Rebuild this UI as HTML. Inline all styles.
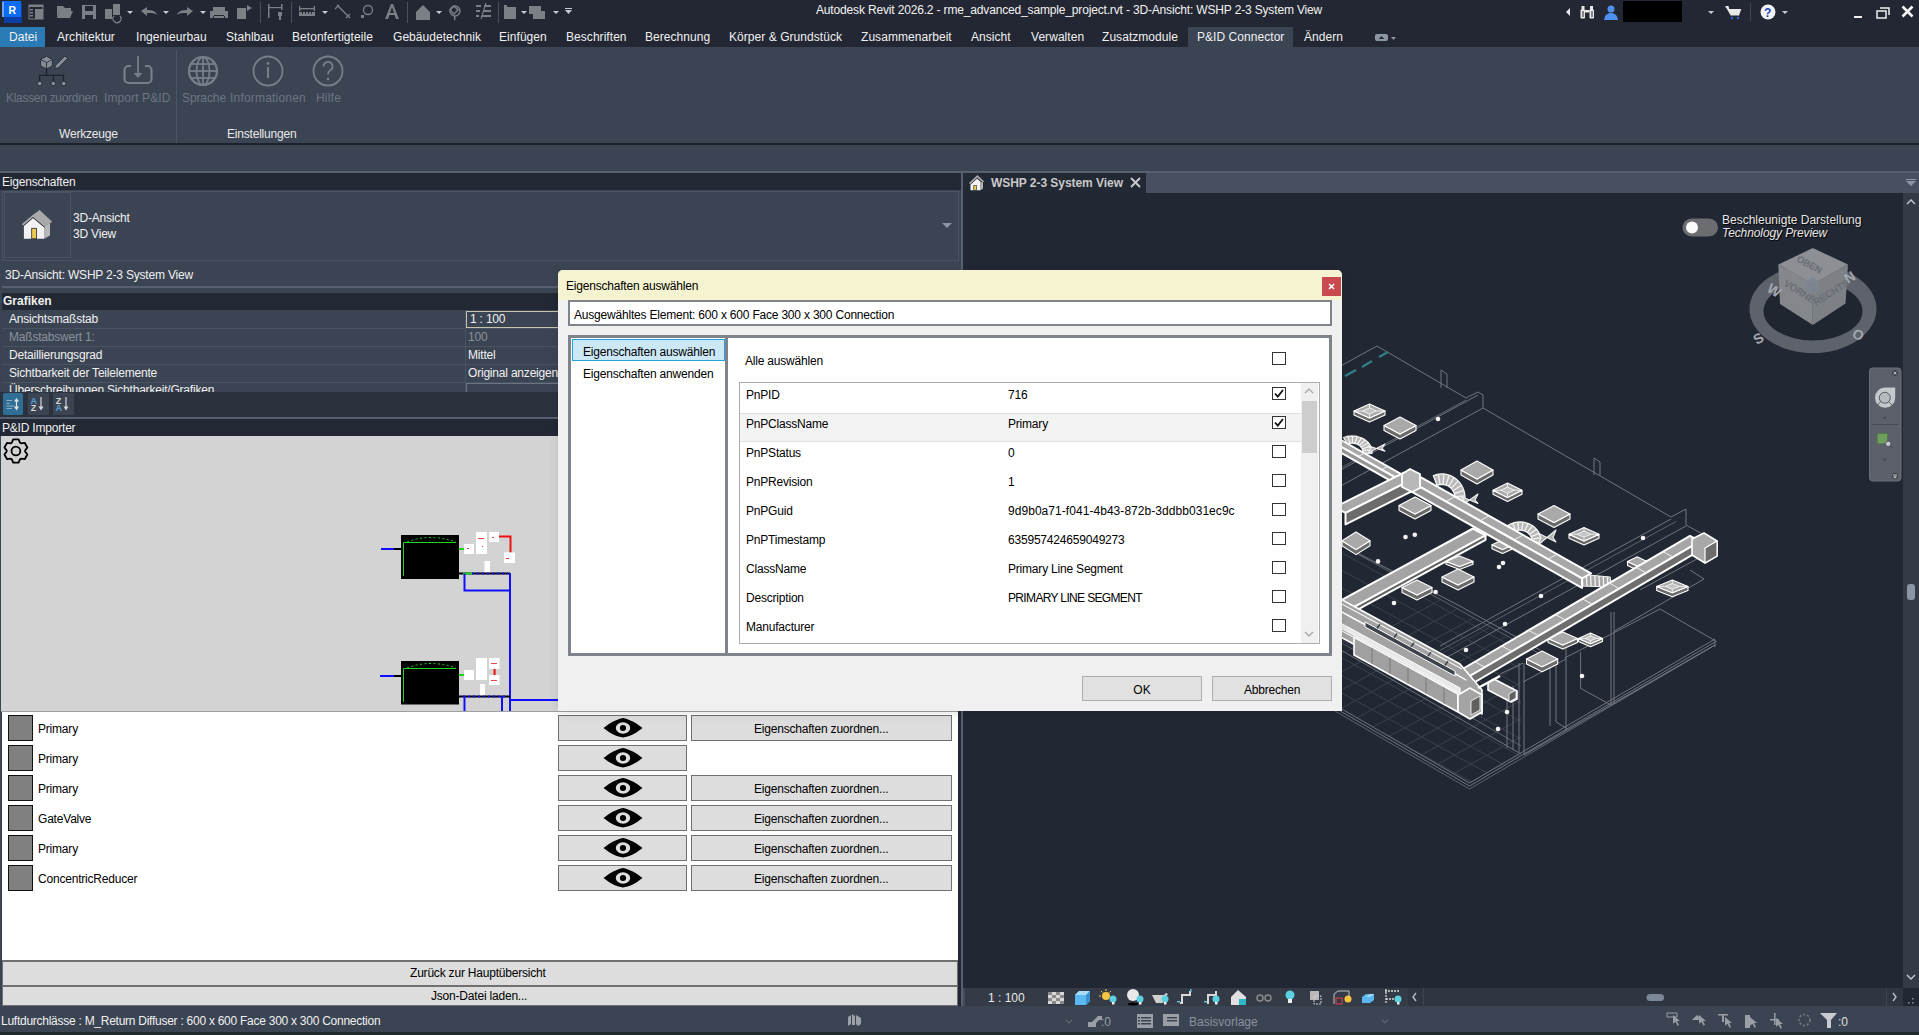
<!DOCTYPE html>
<html><head><meta charset="utf-8">
<style>
*{box-sizing:border-box;margin:0;padding:0}
html,body{width:1919px;height:1035px;overflow:hidden;background:#222733}
body{position:relative;font-family:"Liberation Sans",sans-serif;font-size:12px;letter-spacing:-0.2px;color:#f0f0f0}
.a{position:absolute}
.t{position:absolute;white-space:nowrap;line-height:14px}
</style></head><body>

<!-- TITLE BAR -->
<div class="a" style="left:0;top:0;width:1919px;height:27px;background:#222733"></div>
<div class="t" style="left:816px;top:3px;color:#f2f2f2;letter-spacing:-0.16px">Autodesk Revit 2026.2 - rme_advanced_sample_project.rvt - 3D-Ansicht: WSHP 2-3 System View</div>


<svg class="a" style="left:0;top:0" width="600" height="27" viewBox="0 0 600 27">
 <rect x="4" y="3" width="18" height="20" fill="#0b3fa6"/>
 <rect x="2" y="1" width="19" height="16" fill="#0d6cf2"/>
 <rect x="2" y="2" width="2" height="15" fill="#6aa6f2"/>
 <text x="8.5" y="13.5" font-family="Liberation Sans" font-weight="bold" font-size="10.5" fill="#fff">R</text>
 <g fill="#7b7f86">
  <rect x="29" y="5" width="14" height="14" fill="none" stroke="#7b7f86" stroke-width="1"/>
  <rect x="29" y="5" width="14" height="2"/><rect x="30" y="9" width="3" height="1.5"/><rect x="30" y="12" width="3" height="1.5"/><rect x="30" y="15" width="3" height="1.5"/>
  <rect x="35" y="9" width="8" height="10"/>
  <path d="M57,6 h6 l2,2 h6 v3 h-11 l-3,7 z"/><path d="M60,11 h13 l-3,7 h-13 z"/>
  <path d="M82,5 h14 v14 h-14 z M85,6 v5 h8 v-5 z M85,15 v4 h8 v-4 z" fill-rule="evenodd"/>
  <rect x="105" y="9" width="7" height="10"/><rect x="113" y="4" width="7" height="11"/>
  <path d="M114,16 a4,4 0 1,0 6,0" fill="none" stroke="#7b7f86" stroke-width="1.2"/>
  <path d="M141,11 l6,-4 v3 c5,0 9,1 10,5 c-2,-2 -5,-2 -10,-2 v3 z"/>
  <path d="M193,11 l-6,-4 v3 c-5,0 -9,1 -10,5 c2,-2 5,-2 10,-2 v3 z"/>
  <path d="M213,7 h12 v4 h3 v7 h-3 v-2 h-12 v2 h-3 v-7 h3 z M214,15 v3 h10 v-3 z" fill-rule="evenodd"/>
  <path d="M237,8 h9 v11 h-9 z"/><path d="M247,5 l5,3 -5,3 z"/>
  <rect x="268" y="4" width="1.5" height="14"/><rect x="268" y="7" width="14" height="1.2"/><rect x="281" y="4" width="1.5" height="6"/>
  <path d="M278,12 h4 v4 h-4 z M279,16 h2 v4 h-2 z"/>
  <rect x="299" y="12" width="16" height="4"/><rect x="299" y="8" width="16" height="1.3"/><rect x="299" y="6" width="1.3" height="5"/><rect x="313.7" y="6" width="1.3" height="5"/><g fill="#222733"><rect x="302" y="12" width="1" height="2"/><rect x="305" y="12" width="1" height="2"/><rect x="308" y="12" width="1" height="2"/><rect x="311" y="12" width="1" height="2"/></g>
  <path d="M337,5 l13,13 M335,9 l4,-4 M346,18 l4,-4" stroke="#7b7f86" stroke-width="1.4" fill="none"/>
  <circle cx="368" cy="10" r="4.5" fill="none" stroke="#7b7f86" stroke-width="1.3"/><rect x="361" y="15" width="3" height="3"/>
  <path d="M385,19 l6,-15 h2 l6,15 h-3 l-1.5,-4 h-5 l-1.5,4 z M390,13 h4 l-2,-6 z" fill-rule="evenodd"/>
  <path d="M416,12 l7,-7 7,7 v8 h-14 z"/>
  <path d="M454,6 l4,4 -4,4 -4,-4 z" fill="none" stroke="#7b7f86" stroke-width="1.5"/><circle cx="455" cy="11" r="5" fill="none" stroke="#7b7f86" stroke-width="1.4"/><rect x="454" y="16" width="1.5" height="4"/>
  <rect x="476" y="5" width="5" height="2"/><rect x="484" y="5" width="7" height="2"/><rect x="476" y="10" width="4" height="2"/><rect x="483" y="10" width="8" height="2"/><rect x="476" y="15" width="3" height="2"/><rect x="482" y="15" width="9" height="2"/><path d="M486,3 l-5,16" stroke="#7b7f86" stroke-width="1.2"/>
  <rect x="506" y="7" width="10" height="12"/><rect x="504" y="5" width="3" height="14"/>
  <rect x="529" y="6" width="12" height="8"/><rect x="533" y="11" width="12" height="8"/>
 </g>
 <g fill="#c8ccd2">
  <polygon points="127,11 133,11 130,14"/><polygon points="163,11 169,11 166,14"/><polygon points="200,11 206,11 203,14"/>
  <polygon points="322,11 328,11 325,14"/><polygon points="436,11 442,11 439,14"/><polygon points="521,11 527,11 524,14"/><polygon points="553,11 559,11 556,14"/>
  <polygon points="565,10 572,10 568.5,14"/><rect x="565" y="8" width="7" height="1"/>
 </g>
 <g fill="#4a505a"><rect x="260" y="2" width="1" height="21"/><rect x="291" y="2" width="1" height="21"/><rect x="407" y="2" width="1" height="21"/><rect x="498" y="2" width="1" height="21"/></g>
</svg>
<svg class="a" style="left:1550px;top:0" width="369" height="27" viewBox="1550 0 369 27">
 <polygon points="1570,8 1566,12 1570,16" fill="#e8e8e8"/>
 <g fill="#e8e8e8"><rect x="1580.5" y="9.5" width="4.5" height="9" rx="0.8"/><rect x="1589.5" y="9.5" width="4.5" height="9" rx="0.8"/><rect x="1581.5" y="6" width="3" height="4"/><rect x="1590" y="6" width="3" height="4"/><rect x="1585" y="10" width="4.5" height="2.5"/></g><g fill="#222733"><rect x="1582.5" y="11" width="1" height="6"/><rect x="1591.5" y="11" width="1" height="6"/></g>
 <circle cx="1611" cy="9" r="3.5" fill="#4f8ff0"/><path d="M1604,20 c1,-5 3,-7 7,-7 c4,0 6,2 7,7 z" fill="#4f8ff0"/>
 <rect x="1623" y="1" width="59" height="21" fill="#000"/>
 <polygon points="1708,11 1714,11 1711,14" fill="#c8ccd2"/>
 <path d="M1725.5,6.5 h3 l0.8,2.5 h12 l-2.3,6.5 h-8.3 z" fill="#e8e8e8"/><rect x="1725.5" y="6" width="3" height="1.5" fill="#e8e8e8"/>
 <circle cx="1732" cy="18" r="1.3" fill="#2a5fd0"/><circle cx="1738" cy="18" r="1.3" fill="#2a5fd0"/>
 <rect x="1750" y="3" width="1" height="18" fill="#3e4550"/>
 <circle cx="1768" cy="12" r="7.5" fill="#f2f2f2"/>
 <text x="1764" y="17" font-family="Liberation Sans" font-weight="bold" font-size="12" fill="#1a46c4">?</text>
 <polygon points="1782,11 1788,11 1785,14" fill="#c8ccd2"/>
 <rect x="1854" y="16" width="8" height="2" fill="#f0f0f0"/>
 <path d="M1877,11 h9 v7 h-9 z M1880,8 h9 v7" fill="none" stroke="#f0f0f0" stroke-width="1.5"/>
 <path d="M1902.5,6.5 l10,10 M1912.5,6.5 l-10,10" stroke="#f4f4f4" stroke-width="2.6"/>
</svg>
<!-- MENU BAR -->
<div class="a" style="left:0;top:27px;width:45px;height:20px;background:#2a7ab5"></div>
<div class="a" style="left:1188px;top:27px;width:105px;height:20px;background:#3b4453"></div>
<div id="menu" style="letter-spacing:0.05px">
<div class="t" style="left:9px;top:30px">Datei</div>
<div class="t" style="left:57px;top:30px">Architektur</div>
<div class="t" style="left:136px;top:30px">Ingenieurbau</div>
<div class="t" style="left:226px;top:30px">Stahlbau</div>
<div class="t" style="left:292px;top:30px">Betonfertigteile</div>
<div class="t" style="left:393px;top:30px">Gebäudetechnik</div>
<div class="t" style="left:499px;top:30px">Einfügen</div>
<div class="t" style="left:566px;top:30px">Beschriften</div>
<div class="t" style="left:645px;top:30px">Berechnung</div>
<div class="t" style="left:729px;top:30px">Körper &amp; Grundstück</div>
<div class="t" style="left:861px;top:30px">Zusammenarbeit</div>
<div class="t" style="left:971px;top:30px">Ansicht</div>
<div class="t" style="left:1031px;top:30px">Verwalten</div>
<div class="t" style="left:1102px;top:30px">Zusatzmodule</div>
<div class="t" style="left:1197px;top:30px">P&amp;ID Connector</div>
<div class="t" style="left:1304px;top:30px">Ändern</div>
<svg class="a" style="left:1370px;top:30px" width="30" height="14"><rect x="5" y="4" width="13" height="7" rx="2" fill="#8d96a5"/><polygon points="8.5,9 11.5,6 14.5,9" fill="#2b303a"/><polygon points="21,7 26,7 23.5,10" fill="#8d96a5"/></svg>
</div>

<!-- RIBBON -->
<div class="a" style="left:0;top:47px;width:1919px;height:97px;background:#3b4453"></div>
<div class="a" style="left:176px;top:50px;width:1px;height:93px;background:#4c5565"></div>
<div class="a" style="left:0;top:143px;width:1919px;height:2px;background:#1d222b"></div>
<div class="a" style="left:0;top:145px;width:1919px;height:26px;background:#3b4453"></div>
<div class="a" style="left:0;top:171px;width:1919px;height:2px;background:#566070"></div>


<svg class="a" style="left:0;top:47px" width="360" height="50" viewBox="0 47 360 50">
 <g>
  <g stroke="#1e232b" stroke-width="1.3" fill="none"><line x1="46.5" y1="68" x2="46.5" y2="75.4"/><polyline points="39.6,82 39.6,75.4 63.5,75.4 63.5,82"/><line x1="53.4" y1="75.4" x2="53.4" y2="82"/></g>
  <polygon points="46.5,56.2 52.4,59.5 52.4,65.8 46.5,69 40.6,65.8 40.6,59.5" fill="#868d98" stroke="#1e232b" stroke-width="0.8"/>
  <polyline points="40.6,59.5 46.5,62.6 52.4,59.5" fill="none" stroke="#1e232b" stroke-width="0.8"/><line x1="46.5" y1="62.6" x2="46.5" y2="69" stroke="#1e232b" stroke-width="0.8"/>
  <path d="M54.5,68.8 l1.2,-3.6 9.3,-9.3 2.6,2.6 -9.3,9.3 z" fill="#868d98" stroke="#1e232b" stroke-width="0.8"/>
  <g fill="#868d98" stroke="#1e232b" stroke-width="0.8"><circle cx="39.6" cy="83.5" r="2.3"/><circle cx="53.3" cy="83.5" r="2.3"/><circle cx="63.7" cy="83.5" r="2.3"/></g>
 </g>
 <g fill="none" stroke="#767e8a" stroke-width="1.8">
  <path d="M131,66 h-2.5 a4,4 0 0,0 -4,4 v9 a4,4 0 0,0 4,4 h19 a4,4 0 0,0 4,-4 v-9 a4,4 0 0,0 -4,-4 h-2.5" stroke-width="2.2"/>
  <line x1="138" y1="56" x2="138" y2="74"/>
  <circle cx="203" cy="71" r="14" stroke-width="2.2"/>
  <ellipse cx="203" cy="71" rx="6.5" ry="14"/>
  <line x1="203" y1="57" x2="203" y2="85"/>
  <line x1="189" y1="71" x2="217" y2="71"/>
  <line x1="191" y1="64" x2="215" y2="64"/><line x1="191" y1="78" x2="215" y2="78"/>
  <circle cx="268" cy="71" r="14.5"/>
  <circle cx="328" cy="71" r="14.5"/>
  <path d="M323.5,66.5 a4.5,4.5 0 1,1 6.5,4 c-1.5,1 -2,2 -2,4" />
 </g>
 <g fill="#767e8a">
  <polygon points="133.5,73 142.5,73 138,78"/>
  <circle cx="268" cy="63.5" r="1.4"/><rect x="267" y="67" width="2" height="11"/>
  <circle cx="328" cy="79" r="1.3"/>
 </g>
</svg>
<div class="t" style="left:6px;top:91px;color:#6c7583;letter-spacing:-0.3px">Klassen zuordnen</div>
<div class="t" style="left:104px;top:91px;color:#6c7583;letter-spacing:0.1px">Import P&amp;ID</div>
<div class="t" style="left:182px;top:91px;color:#6c7583;letter-spacing:-0.1px">Sprache</div>
<div class="t" style="left:230px;top:91px;color:#6c7583;letter-spacing:0.2px">Informationen</div>
<div class="t" style="left:316px;top:91px;color:#6c7583;letter-spacing:0.2px">Hilfe</div>
<div class="t" style="left:59px;top:127px;color:#e8e8e8">Werkzeuge</div>
<div class="t" style="left:227px;top:127px;color:#e8e8e8">Einstellungen</div>

<!-- PROPERTIES PANEL -->
<div class="a" style="left:0;top:173px;width:961px;height:17px;background:#222834"></div>
<div class="t" style="left:2px;top:175px">Eigenschaften</div>
<div class="a" style="left:0;top:190px;width:961px;height:228px;background:#3b4453"></div>
<div class="a" style="left:2px;top:191px;width:957px;height:70px;border:1px solid #4b5464"></div>
<div class="a" style="left:4px;top:192px;width:67px;height:66px;border:1px solid #4b5464"></div>
<svg class="a" style="left:0;top:200px" width="70" height="50" viewBox="0 200 70 50">
 <polygon points="44.3,226.5 50,223 50,235.5 44.3,238.7" fill="#b8b8b8"/>
 <polygon points="23.9,225.5 33,217.5 44.3,227 44.3,238.7 23.9,238.7" fill="#f2f2f2"/>
 <polygon points="21.7,224.3 33,214.8 39.6,210 52.2,221.7 44.3,227 33,217.5 23.9,225.5" fill="#a9a9a9"/>
 <polyline points="23.5,225.8 33,217.6 44.6,227.3" fill="none" stroke="#262b33" stroke-width="1"/>
 <rect x="31.7" y="228.3" width="4.8" height="10.4" fill="#f0c850" stroke="#262b33" stroke-width="0.8"/>
</svg>
<div class="t" style="left:73px;top:211px">3D-Ansicht</div>
<div class="t" style="left:73px;top:227px">3D View</div>
<svg class="a" style="left:942px;top:223px" width="10" height="6"><polygon points="0,0 10,0 5,5" fill="#8d96a5"/></svg>
<div class="t" style="left:5px;top:268px;letter-spacing:-0.2px">3D-Ansicht: WSHP 2-3 System View</div>
<div class="a" style="left:853px;top:267px;width:16px;height:3px;overflow:hidden"><div class="t" style="left:0;top:0;font-size:9px;letter-spacing:0;color:#fff">Typ be</div></div>
<div class="a" style="left:2px;top:286px;width:957px;height:2px;background:#566070"></div>
<div class="a" style="left:2px;top:293px;width:957px;height:17px;background:#222834"></div>
<div class="t" style="left:3px;top:294px;font-weight:bold;letter-spacing:0">Grafiken</div>
<div class="a" style="left:2px;top:328px;width:957px;height:1px;background:#4a5363"></div>
<div class="a" style="left:2px;top:346px;width:957px;height:1px;background:#4a5363"></div>
<div class="a" style="left:2px;top:364px;width:957px;height:1px;background:#4a5363"></div>
<div class="a" style="left:2px;top:382px;width:957px;height:1px;background:#4a5363"></div>
<div class="a" style="left:465px;top:310px;width:1px;height:82px;background:#4a5363"></div>
<div class="a" style="left:466px;top:311px;width:493px;height:17px;border:1px solid #c9c2ad"></div>
<div class="a" style="left:466px;top:383px;width:493px;height:9px;border:1px solid #6a7383;border-bottom:0"></div>
<div class="a" style="left:0;top:383px;width:961px;height:9px;overflow:hidden">
 <div class="t" style="left:9px;top:0px">Überschreibungen Sichtbarkeit/Grafiken</div>
</div>
<div class="t" style="left:9px;top:312px">Ansichtsmaßstab</div>
<div class="t" style="left:9px;top:330px;color:#8a929e">Maßstabswert 1:</div>
<div class="t" style="left:9px;top:348px">Detaillierungsgrad</div>
<div class="t" style="left:9px;top:366px">Sichtbarkeit der Teilelemente</div>
<div class="t" style="left:470px;top:312px">1 : 100</div>
<div class="t" style="left:468px;top:330px;color:#8a929e">100</div>
<div class="t" style="left:468px;top:348px">Mittel</div>
<div class="t" style="left:468px;top:366px">Original anzeigen</div>
<div class="a" style="left:0;top:392px;width:961px;height:25px;background:#2b313d"></div>
<div class="a" style="left:3px;top:393px;width:20px;height:22px;background:#2f6f96;border-radius:2px"></div>
<div class="a" style="left:28px;top:393px;width:21px;height:22px;background:#3b4453"></div>
<div class="a" style="left:53px;top:393px;width:21px;height:22px;background:#3b4453"></div>
<svg class="a" style="left:0;top:393px" width="76" height="22" viewBox="0 393 76 22">
 <g stroke="#8fb0c4" stroke-width="1"><line x1="6.5" y1="421.5" x2="12" y2="421.5" transform="translate(0,-21)"/><line x1="6.5" y1="403.5" x2="9.5" y2="403.5"/><line x1="6.5" y1="406" x2="14" y2="406"/><line x1="6.5" y1="408.5" x2="12" y2="408.5"/></g>
 <line x1="16.5" y1="400" x2="16.5" y2="408" stroke="#e6e6e6" stroke-width="1.2"/>
 <polygon points="14,401.5 16.5,398 19,401.5" fill="#e6e6e6"/><polygon points="14,406.5 16.5,410.5 19,406.5" fill="#e6e6e6"/>
 <text x="30.5" y="403.5" font-size="9" fill="#5aa0d8" font-family="Liberation Sans" font-weight="bold">A</text>
 <text x="30.8" y="411" font-size="9" fill="#d8d8d8" font-family="Liberation Sans" font-weight="bold">Z</text>
 <line x1="41" y1="397" x2="41" y2="409" stroke="#d8d8d8" stroke-width="1.2"/><polygon points="38.5,406.5 41,410.5 43.5,406.5" fill="#d8d8d8"/>
 <text x="55.8" y="403.5" font-size="9" fill="#d8d8d8" font-family="Liberation Sans" font-weight="bold">Z</text>
 <text x="55.5" y="411" font-size="9" fill="#5aa0d8" font-family="Liberation Sans" font-weight="bold">A</text>
 <line x1="66" y1="397" x2="66" y2="409" stroke="#d8d8d8" stroke-width="1.2"/><polygon points="63.5,406.5 66,410.5 68.5,406.5" fill="#d8d8d8"/>
</svg>
<div class="a" style="left:0;top:417px;width:961px;height:2px;background:#566070"></div>
<div class="a" style="left:961px;top:173px;width:2px;height:833px;background:#566070"></div>

<!-- VIEW -->
<div class="a" style="left:963px;top:173px;width:956px;height:20px;background:#465060"></div>
<div class="a" style="left:963px;top:173px;width:183px;height:20px;background:#222834"></div>
<div class="t" style="left:991px;top:176px;font-weight:bold;color:#c8c8c8;letter-spacing:-0.05px">WSHP 2-3 System View</div>
<div class="a" style="left:963px;top:193px;width:956px;height:813px;background:#222833"></div>
<!--3D--><svg class="a" style="left:963px;top:193px" width="956" height="813" viewBox="963 193 956 813"><defs><clipPath id="fg"><polygon points="1290,516 1521,645 1521,755 1469.5,783 1290,679"/></clipPath></defs><g clip-path="url(#fg)"><line x1="994.0" y1="624.3" x2="1494.0" y2="899.3" stroke="#3b424d" stroke-width="1" opacity="1"/><line x1="1010.0" y1="615.6" x2="1510.0" y2="890.6" stroke="#3b424d" stroke-width="1" opacity="1"/><line x1="1026.0" y1="606.9" x2="1526.0" y2="881.9" stroke="#3b424d" stroke-width="1" opacity="1"/><line x1="1042.0" y1="598.2" x2="1542.0" y2="873.2" stroke="#3b424d" stroke-width="1" opacity="1"/><line x1="1058.0" y1="589.4" x2="1558.0" y2="864.4" stroke="#3b424d" stroke-width="1" opacity="1"/><line x1="1074.0" y1="580.7" x2="1574.0" y2="855.7" stroke="#3b424d" stroke-width="1" opacity="1"/><line x1="1090.0" y1="572.0" x2="1590.0" y2="847.0" stroke="#3b424d" stroke-width="1" opacity="1"/><line x1="1106.0" y1="563.3" x2="1606.0" y2="838.3" stroke="#3b424d" stroke-width="1" opacity="1"/><line x1="1122.0" y1="554.6" x2="1622.0" y2="829.6" stroke="#3b424d" stroke-width="1" opacity="1"/><line x1="1138.0" y1="545.8" x2="1638.0" y2="820.8" stroke="#3b424d" stroke-width="1" opacity="1"/><line x1="1154.0" y1="537.1" x2="1654.0" y2="812.1" stroke="#3b424d" stroke-width="1" opacity="1"/><line x1="1170.0" y1="528.4" x2="1670.0" y2="803.4" stroke="#3b424d" stroke-width="1" opacity="1"/><line x1="1186.0" y1="519.7" x2="1686.0" y2="794.7" stroke="#3b424d" stroke-width="1" opacity="1"/><line x1="1202.0" y1="511.0" x2="1702.0" y2="786.0" stroke="#3b424d" stroke-width="1" opacity="1"/><line x1="1218.0" y1="502.2" x2="1718.0" y2="777.2" stroke="#3b424d" stroke-width="1" opacity="1"/><line x1="1234.0" y1="493.5" x2="1734.0" y2="768.5" stroke="#3b424d" stroke-width="1" opacity="1"/><line x1="1250.0" y1="484.8" x2="1750.0" y2="759.8" stroke="#3b424d" stroke-width="1" opacity="1"/><line x1="1266.0" y1="476.1" x2="1766.0" y2="751.1" stroke="#3b424d" stroke-width="1" opacity="1"/><line x1="1282.0" y1="467.4" x2="1782.0" y2="742.4" stroke="#3b424d" stroke-width="1" opacity="1"/><line x1="1298.0" y1="458.6" x2="1798.0" y2="733.6" stroke="#3b424d" stroke-width="1" opacity="1"/><line x1="1280.0" y1="687.5" x2="1440.0" y2="600.2" stroke="#3b424d" stroke-width="1" opacity="1"/><line x1="1296.5" y1="696.5" x2="1456.5" y2="609.3" stroke="#3b424d" stroke-width="1" opacity="1"/><line x1="1313.0" y1="705.6" x2="1473.0" y2="618.4" stroke="#3b424d" stroke-width="1" opacity="1"/><line x1="1329.5" y1="714.7" x2="1489.5" y2="627.5" stroke="#3b424d" stroke-width="1" opacity="1"/><line x1="1346.0" y1="723.8" x2="1506.0" y2="636.5" stroke="#3b424d" stroke-width="1" opacity="1"/><line x1="1362.5" y1="732.8" x2="1522.5" y2="645.6" stroke="#3b424d" stroke-width="1" opacity="1"/><line x1="1379.0" y1="741.9" x2="1539.0" y2="654.7" stroke="#3b424d" stroke-width="1" opacity="1"/><line x1="1395.5" y1="751.0" x2="1555.5" y2="663.8" stroke="#3b424d" stroke-width="1" opacity="1"/><line x1="1412.0" y1="760.1" x2="1572.0" y2="672.9" stroke="#3b424d" stroke-width="1" opacity="1"/><line x1="1428.5" y1="769.1" x2="1588.5" y2="681.9" stroke="#3b424d" stroke-width="1" opacity="1"/><line x1="1445.0" y1="778.2" x2="1605.0" y2="691.0" stroke="#3b424d" stroke-width="1" opacity="1"/><line x1="1461.5" y1="787.3" x2="1621.5" y2="700.1" stroke="#3b424d" stroke-width="1" opacity="1"/><line x1="1478.0" y1="796.4" x2="1638.0" y2="709.1" stroke="#3b424d" stroke-width="1" opacity="1"/><line x1="1494.5" y1="805.4" x2="1654.5" y2="718.2" stroke="#3b424d" stroke-width="1" opacity="1"/><line x1="1511.0" y1="814.5" x2="1671.0" y2="727.3" stroke="#3b424d" stroke-width="1" opacity="1"/><line x1="1527.5" y1="823.6" x2="1687.5" y2="736.4" stroke="#3b424d" stroke-width="1" opacity="1"/></g><polyline points="1335.0,705.0 1469.5,783.0 1715.0,639.0" fill="none" stroke="#70757e" stroke-width="1" stroke-linejoin="round"/><polyline points="1335.0,708.0 1469.5,786.0 1715.0,642.0" fill="none" stroke="#70757e" stroke-width="1" stroke-linejoin="round"/><polyline points="1335.0,711.0 1469.5,789.0 1715.0,645.0" fill="none" stroke="#5d636c" stroke-width="1" stroke-linejoin="round"/><line x1="1715.0" y1="640.0" x2="1715.0" y2="647.0" stroke="#70757e" stroke-width="1" opacity="1"/><line x1="1340.0" y1="649.6" x2="1521.0" y2="754.0" stroke="#70757e" stroke-width="1" opacity="1"/><line x1="1340.0" y1="642.0" x2="1521.0" y2="746.0" stroke="#5d636c" stroke-width="1" opacity="1"/><line x1="1524.0" y1="755.0" x2="1715.0" y2="645.0" stroke="#70757e" stroke-width="1" opacity="1"/><line x1="1507.0" y1="686.0" x2="1507.0" y2="748.0" stroke="#70757e" stroke-width="1" opacity="1"/><line x1="1513.0" y1="686.0" x2="1513.0" y2="750.0" stroke="#70757e" stroke-width="1" opacity="1"/><line x1="1519.0" y1="663.0" x2="1519.0" y2="752.0" stroke="#70757e" stroke-width="1" opacity="1"/><line x1="1524.0" y1="663.0" x2="1524.0" y2="755.0" stroke="#70757e" stroke-width="1" opacity="1"/><line x1="1550.0" y1="662.0" x2="1550.0" y2="726.0" stroke="#70757e" stroke-width="1" opacity="1"/><line x1="1556.0" y1="660.0" x2="1556.0" y2="722.0" stroke="#70757e" stroke-width="1" opacity="1"/><line x1="1566.0" y1="648.0" x2="1566.0" y2="731.0" stroke="#70757e" stroke-width="1" opacity="1"/><line x1="1580.6" y1="652.0" x2="1580.6" y2="688.0" stroke="#70757e" stroke-width="1" opacity="1"/><line x1="1611.0" y1="612.0" x2="1611.0" y2="705.0" stroke="#70757e" stroke-width="1" opacity="1"/><line x1="1614.0" y1="612.0" x2="1614.0" y2="704.0" stroke="#70757e" stroke-width="1" opacity="1"/><line x1="1564.6" y1="658.0" x2="1660.0" y2="609.0" stroke="#70757e" stroke-width="1" opacity="1"/><line x1="1660.0" y1="609.0" x2="1716.6" y2="641.5" stroke="#70757e" stroke-width="1" opacity="1"/><line x1="1523.0" y1="682.0" x2="1566.0" y2="659.0" stroke="#70757e" stroke-width="1" opacity="1"/><line x1="1500.0" y1="674.0" x2="1523.0" y2="663.0" stroke="#70757e" stroke-width="1" opacity="1"/><line x1="1580.0" y1="688.0" x2="1611.0" y2="705.0" stroke="#70757e" stroke-width="1" opacity="1"/><line x1="1556.0" y1="722.0" x2="1566.0" y2="728.0" stroke="#70757e" stroke-width="1" opacity="1"/><line x1="1611.0" y1="705.0" x2="1715.0" y2="645.0" stroke="#70757e" stroke-width="1" opacity="1"/><line x1="1614.5" y1="631.0" x2="1704.0" y2="579.0" stroke="#70757e" stroke-width="1" opacity="1"/><line x1="1704.0" y1="579.0" x2="1690.0" y2="570.0" stroke="#70757e" stroke-width="1" opacity="1"/><polyline points="1335.0,369.0 1377.0,346.0 1466.0,398.0" fill="none" stroke="#70757e" stroke-width="1" stroke-linejoin="round"/><polyline points="1466.0,398.0 1478.0,392.0 1483.0,395.0 1483.0,408.0" fill="none" stroke="#70757e" stroke-width="1" stroke-linejoin="round"/><line x1="1483.0" y1="408.0" x2="1671.0" y2="517.0" stroke="#70757e" stroke-width="1" opacity="1"/><line x1="1478.0" y1="395.0" x2="1335.0" y2="473.0" stroke="#70757e" stroke-width="1" opacity="1"/><line x1="1466.0" y1="400.0" x2="1335.0" y2="471.0" stroke="#5d636c" stroke-width="1" opacity="1"/><line x1="1483.0" y1="408.0" x2="1335.0" y2="489.0" stroke="#70757e" stroke-width="1" opacity="1"/><polyline points="1441.0,388.0 1441.0,370.0 1447.0,374.0 1447.0,388.0" fill="none" stroke="#70757e" stroke-width="1" stroke-linejoin="round"/><polyline points="1594.0,475.0 1594.0,458.0 1600.0,462.0 1600.0,475.0" fill="none" stroke="#70757e" stroke-width="1" stroke-linejoin="round"/><polyline points="1671.0,517.0 1686.0,509.0 1686.0,525.0 1717.0,542.0 1717.0,550.0" fill="none" stroke="#70757e" stroke-width="1" stroke-linejoin="round"/><line x1="1686.0" y1="526.0" x2="1440.0" y2="661.0" stroke="#70757e" stroke-width="1" opacity="1"/><line x1="1671.0" y1="519.0" x2="1440.0" y2="646.0" stroke="#70757e" stroke-width="1" opacity="1"/><line x1="1676.0" y1="521.5" x2="1440.0" y2="650.5" stroke="#5d636c" stroke-width="1" opacity="1"/><line x1="1717.0" y1="548.0" x2="1640.0" y2="590.0" stroke="#70757e" stroke-width="1" opacity="1"/><line x1="1345.0" y1="376.0" x2="1356.0" y2="370.0" stroke="#2f8088" stroke-width="2.2" opacity="1"/><line x1="1362.0" y1="367.0" x2="1372.0" y2="361.0" stroke="#2f8088" stroke-width="2.2" opacity="1"/><line x1="1379.0" y1="357.0" x2="1388.0" y2="352.0" stroke="#2f8088" stroke-width="2.2" opacity="1"/><line x1="1342.0" y1="545.0" x2="1456.0" y2="604.0" stroke="#70757e" stroke-width="1" opacity="1"/><line x1="1352.0" y1="551.0" x2="1456.0" y2="608.0" stroke="#5d636c" stroke-width="1" opacity="1"/><line x1="1456.0" y1="604.0" x2="1540.0" y2="650.0" stroke="#70757e" stroke-width="1" opacity="1"/><line x1="1456.0" y1="608.0" x2="1540.0" y2="654.0" stroke="#5d636c" stroke-width="1" opacity="1"/><polygon points="1433.4,475.7 1435.3,475.0 1437.2,474.5 1439.2,474.2 1441.2,474.0 1443.2,474.0 1445.2,474.2 1447.2,474.6 1449.1,475.2 1451.0,475.9 1452.8,476.8 1454.5,477.9 1456.2,479.1 1457.7,480.4 1459.1,481.9 1460.4,483.6 1461.5,485.3 1462.5,487.1 1463.3,489.0 1464.0,491.0 1464.5,493.0 1464.8,495.1 1465.0,497.2 1465.0,499.3 1464.8,501.3 1454.9,499.9 1455.0,498.7 1455.0,497.5 1454.9,496.3 1454.7,495.2 1454.4,494.0 1454.1,492.9 1453.6,491.8 1453.0,490.8 1452.4,489.8 1451.7,488.9 1450.9,488.1 1450.0,487.3 1449.1,486.6 1448.1,486.0 1447.1,485.5 1446.0,485.1 1444.9,484.8 1443.8,484.6 1442.7,484.5 1441.5,484.4 1440.4,484.5 1439.3,484.7 1438.2,485.0 1437.1,485.4" fill="#b8b8b8" stroke="#f4f4f4" stroke-width="1.3" stroke-linejoin="round"/><line x1="1438.5" y1="474.3" x2="1440.0" y2="484.6" stroke="#f4f4f4" stroke-width="1.3" opacity="1"/><line x1="1443.9" y1="474.1" x2="1443.1" y2="484.5" stroke="#f4f4f4" stroke-width="1.3" opacity="1"/><line x1="1449.1" y1="475.2" x2="1446.0" y2="485.1" stroke="#f4f4f4" stroke-width="1.3" opacity="1"/><line x1="1454.0" y1="477.5" x2="1448.8" y2="486.4" stroke="#f4f4f4" stroke-width="1.3" opacity="1"/><line x1="1458.2" y1="480.9" x2="1451.1" y2="488.4" stroke="#f4f4f4" stroke-width="1.3" opacity="1"/><line x1="1461.5" y1="485.3" x2="1453.0" y2="490.8" stroke="#f4f4f4" stroke-width="1.3" opacity="1"/><line x1="1463.8" y1="490.3" x2="1454.3" y2="493.7" stroke="#f4f4f4" stroke-width="1.3" opacity="1"/><line x1="1464.9" y1="495.8" x2="1454.9" y2="496.7" stroke="#f4f4f4" stroke-width="1.3" opacity="1"/><polygon points="1461.0,496.4 1469.5,500.0 1461.0,506.0 1464.0,500.0" fill="#b0b0b0" stroke="#f0f0f0" stroke-width="1.1" stroke-linejoin="round"/><polygon points="1478.0,494.0 1469.5,500.0 1478.0,503.6 1475.0,500.0" fill="#b0b0b0" stroke="#f0f0f0" stroke-width="1.1" stroke-linejoin="round"/><polygon points="1508.0,525.4 1509.6,524.5 1511.4,523.7 1513.2,523.0 1515.2,522.5 1517.1,522.2 1519.1,522.0 1521.1,522.0 1523.0,522.2 1525.0,522.5 1526.9,523.1 1528.7,523.7 1530.5,524.5 1532.2,525.5 1533.7,526.6 1535.2,527.9 1536.5,529.2 1537.6,530.7 1538.6,532.2 1539.5,533.9 1540.1,535.6 1540.6,537.3 1540.9,539.1 1541.0,540.9 1540.9,542.7 1532.0,541.9 1532.0,540.9 1531.9,539.9 1531.8,538.9 1531.5,537.9 1531.1,536.9 1530.6,536.0 1530.1,535.1 1529.4,534.3 1528.7,533.5 1527.8,532.8 1527.0,532.2 1526.0,531.6 1525.0,531.1 1523.9,530.7 1522.9,530.5 1521.7,530.3 1520.6,530.2 1519.5,530.2 1518.3,530.2 1517.2,530.4 1516.1,530.7 1515.1,531.1 1514.1,531.6 1513.1,532.1" fill="#b8b8b8" stroke="#f4f4f4" stroke-width="1.3" stroke-linejoin="round"/><line x1="1512.6" y1="523.2" x2="1515.8" y2="530.8" stroke="#f4f4f4" stroke-width="1.3" opacity="1"/><line x1="1517.8" y1="522.1" x2="1518.7" y2="530.2" stroke="#f4f4f4" stroke-width="1.3" opacity="1"/><line x1="1523.0" y1="522.2" x2="1521.7" y2="530.3" stroke="#f4f4f4" stroke-width="1.3" opacity="1"/><line x1="1528.1" y1="523.5" x2="1524.6" y2="531.0" stroke="#f4f4f4" stroke-width="1.3" opacity="1"/><line x1="1532.7" y1="525.9" x2="1527.3" y2="532.4" stroke="#f4f4f4" stroke-width="1.3" opacity="1"/><line x1="1536.5" y1="529.2" x2="1529.4" y2="534.3" stroke="#f4f4f4" stroke-width="1.3" opacity="1"/><line x1="1539.2" y1="533.3" x2="1531.0" y2="536.6" stroke="#f4f4f4" stroke-width="1.3" opacity="1"/><line x1="1540.7" y1="537.9" x2="1531.8" y2="539.2" stroke="#f4f4f4" stroke-width="1.3" opacity="1"/><polygon points="1538.0,533.0 1547.0,537.5 1538.0,545.0 1541.0,537.5" fill="#b0b0b0" stroke="#f0f0f0" stroke-width="1.1" stroke-linejoin="round"/><polygon points="1556.0,530.0 1547.0,537.5 1556.0,542.0 1553.0,537.5" fill="#b0b0b0" stroke="#f0f0f0" stroke-width="1.1" stroke-linejoin="round"/><polygon points="1578.0,574.0 1610.0,577.0 1612.0,587.0 1580.0,586.0" fill="#a8a8a8" stroke="#f0f0f0" stroke-width="1.2" stroke-linejoin="round"/><line x1="1582.2" y1="574.4" x2="1582.7" y2="586.1" stroke="#f0f0f0" stroke-width="1.4" opacity="1"/><line x1="1586.4" y1="574.8" x2="1586.9" y2="586.2" stroke="#f0f0f0" stroke-width="1.4" opacity="1"/><line x1="1590.6" y1="575.2" x2="1591.1" y2="586.3" stroke="#f0f0f0" stroke-width="1.4" opacity="1"/><line x1="1594.8" y1="575.6" x2="1595.3" y2="586.4" stroke="#f0f0f0" stroke-width="1.4" opacity="1"/><line x1="1599.0" y1="576.0" x2="1599.5" y2="586.5" stroke="#f0f0f0" stroke-width="1.4" opacity="1"/><line x1="1603.2" y1="576.4" x2="1603.7" y2="586.6" stroke="#f0f0f0" stroke-width="1.4" opacity="1"/><line x1="1607.4" y1="576.8" x2="1607.9" y2="586.7" stroke="#f0f0f0" stroke-width="1.4" opacity="1"/><polygon points="1343.5,437.5 1345.2,437.0 1346.8,436.5 1348.5,436.2 1350.3,436.1 1352.0,436.0 1353.7,436.1 1355.5,436.2 1357.2,436.5 1358.8,437.0 1360.5,437.5 1362.0,438.1 1363.5,438.9 1364.9,439.7 1366.1,440.7 1367.3,441.7 1368.4,442.8 1369.3,444.0 1370.1,445.2 1370.8,446.5 1371.3,447.9 1371.7,449.2 1371.9,450.6 1372.0,452.0 1371.9,453.4 1363.0,452.8 1363.0,452.0 1363.0,451.2 1362.8,450.5 1362.6,449.7 1362.3,449.0 1362.0,448.3 1361.5,447.6 1361.0,447.0 1360.4,446.3 1359.8,445.8 1359.1,445.3 1358.3,444.8 1357.5,444.4 1356.6,444.0 1355.8,443.7 1354.8,443.5 1353.9,443.3 1353.0,443.2 1352.0,443.2 1351.0,443.2 1350.1,443.3 1349.2,443.5 1348.2,443.7 1347.4,444.0" fill="#b8b8b8" stroke="#f4f4f4" stroke-width="1.3" stroke-linejoin="round"/><line x1="1348.0" y1="436.3" x2="1349.8" y2="443.4" stroke="#f4f4f4" stroke-width="1.3" opacity="1"/><line x1="1352.6" y1="436.0" x2="1352.3" y2="443.2" stroke="#f4f4f4" stroke-width="1.3" opacity="1"/><line x1="1357.2" y1="436.5" x2="1354.8" y2="443.5" stroke="#f4f4f4" stroke-width="1.3" opacity="1"/><line x1="1361.5" y1="437.9" x2="1357.2" y2="444.3" stroke="#f4f4f4" stroke-width="1.3" opacity="1"/><line x1="1365.3" y1="440.0" x2="1359.3" y2="445.4" stroke="#f4f4f4" stroke-width="1.3" opacity="1"/><line x1="1368.4" y1="442.8" x2="1361.0" y2="447.0" stroke="#f4f4f4" stroke-width="1.3" opacity="1"/><line x1="1370.6" y1="446.1" x2="1362.2" y2="448.8" stroke="#f4f4f4" stroke-width="1.3" opacity="1"/><line x1="1371.8" y1="449.7" x2="1362.9" y2="450.7" stroke="#f4f4f4" stroke-width="1.3" opacity="1"/><polygon points="1368.0,445.8 1376.5,448.5 1368.0,453.0 1371.0,448.5" fill="#b0b0b0" stroke="#f0f0f0" stroke-width="1.1" stroke-linejoin="round"/><polygon points="1385.0,444.0 1376.5,448.5 1385.0,451.2 1382.0,448.5" fill="#b0b0b0" stroke="#f0f0f0" stroke-width="1.1" stroke-linejoin="round"/><polygon points="1354.0,411.0 1369.5,418.0 1385.0,411.0 1385.0,415.0 1369.5,422.0 1354.0,415.0" fill="#6a6a6a" stroke="#ffffff" stroke-width="1.1" stroke-linejoin="round"/><polygon points="1354.0,411.0 1369.5,404.0 1385.0,411.0 1369.5,418.0" fill="#a9a9a9" stroke="#ffffff" stroke-width="1.1" stroke-linejoin="round"/><polygon points="1362.5,411.0 1369.5,407.9 1376.5,411.0 1369.5,414.1" fill="#c4c4c4" stroke="#ffffff" stroke-width="0.8" stroke-linejoin="round"/><line x1="1354.0" y1="411.0" x2="1362.5" y2="411.0" stroke="#fff" stroke-width="0.8" opacity="1"/><line x1="1385.0" y1="411.0" x2="1376.5" y2="411.0" stroke="#fff" stroke-width="0.8" opacity="1"/><line x1="1369.5" y1="404.0" x2="1369.5" y2="407.9" stroke="#fff" stroke-width="0.8" opacity="1"/><line x1="1369.5" y1="418.0" x2="1369.5" y2="414.1" stroke="#fff" stroke-width="0.8" opacity="1"/><polygon points="1384.0,425.5 1400.0,434.0 1416.0,425.5 1416.0,430.5 1400.0,439.0 1384.0,430.5" fill="#6a6a6a" stroke="#ffffff" stroke-width="1.1" stroke-linejoin="round"/><polygon points="1384.0,425.5 1400.0,417.0 1416.0,425.5 1400.0,434.0" fill="#a9a9a9" stroke="#ffffff" stroke-width="1.1" stroke-linejoin="round"/><polygon points="1461.0,470.0 1477.0,479.0 1493.0,470.0 1493.0,475.0 1477.0,484.0 1461.0,475.0" fill="#6a6a6a" stroke="#ffffff" stroke-width="1.1" stroke-linejoin="round"/><polygon points="1461.0,470.0 1477.0,461.0 1493.0,470.0 1477.0,479.0" fill="#a9a9a9" stroke="#ffffff" stroke-width="1.1" stroke-linejoin="round"/><polygon points="1493.0,490.2 1507.5,497.5 1522.0,490.2 1522.0,494.2 1507.5,501.5 1493.0,494.2" fill="#6a6a6a" stroke="#ffffff" stroke-width="1.1" stroke-linejoin="round"/><polygon points="1493.0,490.2 1507.5,483.0 1522.0,490.2 1507.5,497.5" fill="#a9a9a9" stroke="#ffffff" stroke-width="1.1" stroke-linejoin="round"/><polygon points="1501.0,490.2 1507.5,487.0 1514.0,490.2 1507.5,493.5" fill="#c4c4c4" stroke="#ffffff" stroke-width="0.8" stroke-linejoin="round"/><line x1="1493.0" y1="490.2" x2="1501.0" y2="490.2" stroke="#fff" stroke-width="0.8" opacity="1"/><line x1="1522.0" y1="490.2" x2="1514.0" y2="490.2" stroke="#fff" stroke-width="0.8" opacity="1"/><line x1="1507.5" y1="483.0" x2="1507.5" y2="487.0" stroke="#fff" stroke-width="0.8" opacity="1"/><line x1="1507.5" y1="497.5" x2="1507.5" y2="493.5" stroke="#fff" stroke-width="0.8" opacity="1"/><polygon points="1399.0,505.5 1415.0,514.0 1431.0,505.5 1431.0,510.5 1415.0,519.0 1399.0,510.5" fill="#6a6a6a" stroke="#ffffff" stroke-width="1.1" stroke-linejoin="round"/><polygon points="1399.0,505.5 1415.0,497.0 1431.0,505.5 1415.0,514.0" fill="#a9a9a9" stroke="#ffffff" stroke-width="1.1" stroke-linejoin="round"/><polygon points="1538.0,514.0 1554.0,522.5 1570.0,514.0 1570.0,519.0 1554.0,527.5 1538.0,519.0" fill="#6a6a6a" stroke="#ffffff" stroke-width="1.1" stroke-linejoin="round"/><polygon points="1538.0,514.0 1554.0,505.6 1570.0,514.0 1554.0,522.5" fill="#a9a9a9" stroke="#ffffff" stroke-width="1.1" stroke-linejoin="round"/><polygon points="1569.0,534.2 1584.0,541.0 1599.0,534.2 1599.0,538.2 1584.0,545.0 1569.0,538.2" fill="#6a6a6a" stroke="#ffffff" stroke-width="1.1" stroke-linejoin="round"/><polygon points="1569.0,534.2 1584.0,527.5 1599.0,534.2 1584.0,541.0" fill="#a9a9a9" stroke="#ffffff" stroke-width="1.1" stroke-linejoin="round"/><polygon points="1577.2,534.2 1584.0,531.2 1590.8,534.2 1584.0,537.3" fill="#c4c4c4" stroke="#ffffff" stroke-width="0.8" stroke-linejoin="round"/><line x1="1569.0" y1="534.2" x2="1577.2" y2="534.2" stroke="#fff" stroke-width="0.8" opacity="1"/><line x1="1599.0" y1="534.2" x2="1590.8" y2="534.2" stroke="#fff" stroke-width="0.8" opacity="1"/><line x1="1584.0" y1="527.5" x2="1584.0" y2="531.2" stroke="#fff" stroke-width="0.8" opacity="1"/><line x1="1584.0" y1="541.0" x2="1584.0" y2="537.3" stroke="#fff" stroke-width="0.8" opacity="1"/><polygon points="1342.0,540.8 1356.0,549.6 1370.0,540.8 1370.0,545.8 1356.0,554.6 1342.0,545.8" fill="#6a6a6a" stroke="#ffffff" stroke-width="1.1" stroke-linejoin="round"/><polygon points="1342.0,540.8 1356.0,532.0 1370.0,540.8 1356.0,549.6" fill="#a9a9a9" stroke="#ffffff" stroke-width="1.1" stroke-linejoin="round"/><polygon points="1442.0,577.0 1458.0,585.0 1474.0,577.0 1474.0,582.0 1458.0,590.0 1442.0,582.0" fill="#6a6a6a" stroke="#ffffff" stroke-width="1.1" stroke-linejoin="round"/><polygon points="1442.0,577.0 1458.0,569.0 1474.0,577.0 1458.0,585.0" fill="#a9a9a9" stroke="#ffffff" stroke-width="1.1" stroke-linejoin="round"/><polygon points="1446.0,561.3 1459.5,566.6 1473.0,561.3 1473.0,564.3 1459.5,569.6 1446.0,564.3" fill="#6a6a6a" stroke="#ffffff" stroke-width="1.1" stroke-linejoin="round"/><polygon points="1446.0,561.3 1459.5,556.0 1473.0,561.3 1459.5,566.6" fill="#a9a9a9" stroke="#ffffff" stroke-width="1.1" stroke-linejoin="round"/><polygon points="1402.0,587.5 1417.0,595.0 1432.0,587.5 1432.0,592.5 1417.0,600.0 1402.0,592.5" fill="#6a6a6a" stroke="#ffffff" stroke-width="1.1" stroke-linejoin="round"/><polygon points="1402.0,587.5 1417.0,580.0 1432.0,587.5 1417.0,595.0" fill="#a9a9a9" stroke="#ffffff" stroke-width="1.1" stroke-linejoin="round"/><polygon points="1627.5,561.4 1637.2,566.0 1647.0,561.4 1647.0,565.4 1637.2,570.0 1627.5,565.4" fill="#6a6a6a" stroke="#ffffff" stroke-width="1.1" stroke-linejoin="round"/><polygon points="1627.5,561.4 1637.2,556.7 1647.0,561.4 1637.2,566.0" fill="#a9a9a9" stroke="#ffffff" stroke-width="1.1" stroke-linejoin="round"/><polygon points="1492.0,544.8 1502.5,549.5 1513.0,544.8 1513.0,548.8 1502.5,553.5 1492.0,548.8" fill="#6a6a6a" stroke="#ffffff" stroke-width="1.1" stroke-linejoin="round"/><polygon points="1492.0,544.8 1502.5,540.0 1513.0,544.8 1502.5,549.5" fill="#a9a9a9" stroke="#ffffff" stroke-width="1.1" stroke-linejoin="round"/><polygon points="1656.7,586.4 1672.3,592.7 1688.0,586.4 1688.0,590.4 1672.3,596.7 1656.7,590.4" fill="#6a6a6a" stroke="#ffffff" stroke-width="1.1" stroke-linejoin="round"/><polygon points="1656.7,586.4 1672.3,580.0 1688.0,586.4 1672.3,592.7" fill="#a9a9a9" stroke="#ffffff" stroke-width="1.1" stroke-linejoin="round"/><polygon points="1665.3,586.4 1672.3,583.5 1679.4,586.4 1672.3,589.2" fill="#c4c4c4" stroke="#ffffff" stroke-width="0.8" stroke-linejoin="round"/><line x1="1656.7" y1="586.4" x2="1665.3" y2="586.4" stroke="#fff" stroke-width="0.8" opacity="1"/><line x1="1688.0" y1="586.4" x2="1679.4" y2="586.4" stroke="#fff" stroke-width="0.8" opacity="1"/><line x1="1672.3" y1="580.0" x2="1672.3" y2="583.5" stroke="#fff" stroke-width="0.8" opacity="1"/><line x1="1672.3" y1="592.7" x2="1672.3" y2="589.2" stroke="#fff" stroke-width="0.8" opacity="1"/><polygon points="1526.5,658.9 1542.1,666.7 1557.7,658.9 1557.7,663.9 1542.1,671.7 1526.5,663.9" fill="#6a6a6a" stroke="#ffffff" stroke-width="1.1" stroke-linejoin="round"/><polygon points="1526.5,658.9 1542.1,651.0 1557.7,658.9 1542.1,666.7" fill="#a9a9a9" stroke="#ffffff" stroke-width="1.1" stroke-linejoin="round"/><polygon points="1548.0,638.5 1562.8,645.0 1577.5,638.5 1577.5,642.5 1562.8,649.0 1548.0,642.5" fill="#6a6a6a" stroke="#ffffff" stroke-width="1.1" stroke-linejoin="round"/><polygon points="1548.0,638.5 1562.8,632.0 1577.5,638.5 1562.8,645.0" fill="#a9a9a9" stroke="#ffffff" stroke-width="1.1" stroke-linejoin="round"/><polygon points="1578.5,638.4 1590.5,643.7 1602.5,638.4 1602.5,641.4 1590.5,646.7 1578.5,641.4" fill="#6a6a6a" stroke="#ffffff" stroke-width="1.1" stroke-linejoin="round"/><polygon points="1578.5,638.4 1590.5,633.0 1602.5,638.4 1590.5,643.7" fill="#a9a9a9" stroke="#ffffff" stroke-width="1.1" stroke-linejoin="round"/><polygon points="1585.1,638.4 1590.5,635.9 1595.9,638.4 1590.5,640.8" fill="#c4c4c4" stroke="#ffffff" stroke-width="0.8" stroke-linejoin="round"/><line x1="1578.5" y1="638.4" x2="1585.1" y2="638.4" stroke="#fff" stroke-width="0.8" opacity="1"/><line x1="1602.5" y1="638.4" x2="1595.9" y2="638.4" stroke="#fff" stroke-width="0.8" opacity="1"/><line x1="1590.5" y1="633.0" x2="1590.5" y2="635.9" stroke="#fff" stroke-width="0.8" opacity="1"/><line x1="1590.5" y1="643.7" x2="1590.5" y2="640.8" stroke="#fff" stroke-width="0.8" opacity="1"/><polygon points="1335.0,443.3 1405.0,482.9 1411.0,479.6 1341.0,440.0" fill="#a8a8a8" stroke="#ffffff" stroke-width="2" stroke-linejoin="round"/><polygon points="1335.0,443.3 1405.0,482.9 1405.0,488.9 1335.0,449.3" fill="#969696" stroke="#ffffff" stroke-width="2" stroke-linejoin="round"/><line x1="1358.3" y1="456.5" x2="1364.3" y2="453.2" stroke="#f0f0f0" stroke-width="1" opacity="1"/><line x1="1381.7" y1="469.7" x2="1387.7" y2="466.4" stroke="#f0f0f0" stroke-width="1" opacity="1"/><polygon points="1412.0,482.3 1582.0,578.4 1591.0,573.4 1421.0,477.4" fill="#a8a8a8" stroke="#ffffff" stroke-width="2" stroke-linejoin="round"/><polygon points="1412.0,482.3 1582.0,578.4 1582.0,587.9 1412.0,491.8" fill="#969696" stroke="#ffffff" stroke-width="2" stroke-linejoin="round"/><line x1="1446.0" y1="501.5" x2="1455.0" y2="496.6" stroke="#f0f0f0" stroke-width="1" opacity="1"/><line x1="1480.0" y1="520.7" x2="1489.0" y2="515.8" stroke="#f0f0f0" stroke-width="1" opacity="1"/><line x1="1514.0" y1="539.9" x2="1523.0" y2="535.0" stroke="#f0f0f0" stroke-width="1" opacity="1"/><line x1="1548.0" y1="559.1" x2="1557.0" y2="554.2" stroke="#f0f0f0" stroke-width="1" opacity="1"/><polygon points="1335.0,507.1 1404.0,472.6 1414.5,478.4 1345.5,512.9" fill="#a8a8a8" stroke="#ffffff" stroke-width="2" stroke-linejoin="round"/><polygon points="1345.5,512.9 1414.5,478.4 1414.5,489.9 1345.5,524.4" fill="#6c6c6c" stroke="#ffffff" stroke-width="2" stroke-linejoin="round"/><polygon points="1402.0,474.0 1410.0,469.0 1420.0,474.0 1420.0,488.0 1412.0,492.0 1402.0,487.0" fill="#b8b8b8" stroke="#ffffff" stroke-width="1.8" stroke-linejoin="round"/><polygon points="1335.0,603.7 1473.0,528.5 1485.5,535.4 1347.5,610.6" fill="#a4a4a4" stroke="#ffffff" stroke-width="2" stroke-linejoin="round"/><polygon points="1347.5,610.6 1485.5,535.4 1485.5,539.9 1347.5,615.1" fill="#5e5e5e" stroke="#ffffff" stroke-width="2" stroke-linejoin="round"/><polygon points="1448.0,677.5 1690.0,535.9 1700.0,541.4 1458.0,683.0" fill="#a6a6a6" stroke="#ffffff" stroke-width="2" stroke-linejoin="round"/><polygon points="1458.0,683.0 1700.0,541.4 1700.0,550.4 1458.0,692.0" fill="#6e6e6e" stroke="#ffffff" stroke-width="2" stroke-linejoin="round"/><line x1="1474.9" y1="661.8" x2="1484.9" y2="667.3" stroke="#f0f0f0" stroke-width="1" opacity="1"/><line x1="1501.8" y1="646.0" x2="1511.8" y2="651.5" stroke="#f0f0f0" stroke-width="1" opacity="1"/><line x1="1528.7" y1="630.3" x2="1538.7" y2="635.8" stroke="#f0f0f0" stroke-width="1" opacity="1"/><line x1="1555.6" y1="614.6" x2="1565.6" y2="620.1" stroke="#f0f0f0" stroke-width="1" opacity="1"/><line x1="1582.4" y1="598.9" x2="1592.4" y2="604.4" stroke="#f0f0f0" stroke-width="1" opacity="1"/><line x1="1609.3" y1="583.1" x2="1619.3" y2="588.6" stroke="#f0f0f0" stroke-width="1" opacity="1"/><line x1="1636.2" y1="567.4" x2="1646.2" y2="572.9" stroke="#f0f0f0" stroke-width="1" opacity="1"/><line x1="1663.1" y1="551.7" x2="1673.1" y2="557.2" stroke="#f0f0f0" stroke-width="1" opacity="1"/><polygon points="1692.0,539.0 1704.0,533.0 1717.0,541.0 1717.0,556.0 1705.0,563.0 1692.0,555.0" fill="#a8a8a8" stroke="#ffffff" stroke-width="1.6" stroke-linejoin="round"/><polygon points="1705.0,548.0 1717.0,541.0 1717.0,556.0 1705.0,563.0" fill="#6c6c6c" stroke="#ffffff" stroke-width="1.2" stroke-linejoin="round"/><polygon points="1335.0,596.0 1460.0,664.0 1482.0,690.0 1482.0,714.0 1457.0,700.0 1335.0,634.0" fill="#a2a2a2" stroke="#ffffff" stroke-width="1.6" stroke-linejoin="round"/><polygon points="1335.0,608.0 1456.0,674.0 1466.0,680.0 1345.0,614.0" fill="#d8d8d8" stroke="#ffffff" stroke-width="1.2" stroke-linejoin="round"/><polygon points="1365.0,622.0 1455.0,671.0 1455.0,676.0 1365.0,627.0" fill="#3d434c" stroke="#ffffff" stroke-width="1" stroke-linejoin="round"/><polygon points="1335.0,620.0 1460.0,688.0 1460.0,693.0 1335.0,625.0" fill="#e8e8e8" stroke="#ffffff" stroke-width="1" stroke-linejoin="round"/><polygon points="1354.0,637.0 1458.0,694.0 1458.0,712.0 1354.0,655.0" fill="#a0a0a0" stroke="#ffffff" stroke-width="1.6" stroke-linejoin="round"/><line x1="1340.0" y1="603.0" x2="1462.0" y2="669.0" stroke="#f4f4f4" stroke-width="1.3" opacity="1"/><line x1="1342.0" y1="631.0" x2="1458.0" y2="693.0" stroke="#f4f4f4" stroke-width="1.3" opacity="1"/><line x1="1372.0" y1="647.9" x2="1372.0" y2="663.9" stroke="#7a7a7a" stroke-width="1" opacity="1"/><line x1="1390.0" y1="657.8" x2="1390.0" y2="673.8" stroke="#7a7a7a" stroke-width="1" opacity="1"/><line x1="1408.0" y1="667.7" x2="1408.0" y2="683.7" stroke="#7a7a7a" stroke-width="1" opacity="1"/><line x1="1426.0" y1="677.6" x2="1426.0" y2="693.6" stroke="#7a7a7a" stroke-width="1" opacity="1"/><line x1="1444.0" y1="687.5" x2="1444.0" y2="703.5" stroke="#7a7a7a" stroke-width="1" opacity="1"/><line x1="1377.0" y1="628.3" x2="1380.0" y2="624.3" stroke="#3d434c" stroke-width="1.5" opacity="1"/><line x1="1394.0" y1="637.5" x2="1397.0" y2="633.5" stroke="#3d434c" stroke-width="1.5" opacity="1"/><line x1="1411.0" y1="646.8" x2="1414.0" y2="642.8" stroke="#3d434c" stroke-width="1.5" opacity="1"/><line x1="1428.0" y1="656.1" x2="1431.0" y2="652.1" stroke="#3d434c" stroke-width="1.5" opacity="1"/><line x1="1445.0" y1="665.3" x2="1448.0" y2="661.3" stroke="#3d434c" stroke-width="1.5" opacity="1"/><polygon points="1458.0,695.0 1470.0,688.0 1482.0,695.0 1482.0,712.0 1470.0,719.0 1458.0,712.0" fill="#a4a4a4" stroke="#ffffff" stroke-width="1.6" stroke-linejoin="round"/><polygon points="1471.0,701.0 1480.0,696.0 1480.0,710.0 1471.0,715.0" fill="#606060" stroke="#ffffff" stroke-width="0.8" stroke-linejoin="round"/><polygon points="1488.0,683.0 1494.0,679.0 1517.0,691.0 1517.0,699.0 1511.0,702.0 1488.0,690.0" fill="#a8a8a8" stroke="#ffffff" stroke-width="1.6" stroke-linejoin="round"/><polygon points="1509.0,694.0 1516.0,690.0 1516.0,698.0 1509.0,702.0" fill="#606060" stroke="#ffffff" stroke-width="0.8" stroke-linejoin="round"/><line x1="1478.0" y1="688.0" x2="1500.0" y2="676.0" stroke="#ffffff" stroke-width="2.5" opacity="1"/><circle cx="1438" cy="419" r="2.3" fill="#f4f4f4"/><circle cx="1405.5" cy="537" r="2.3" fill="#f4f4f4"/><circle cx="1414.8" cy="534.8" r="2.3" fill="#f4f4f4"/><circle cx="1378" cy="561.4" r="2.3" fill="#f4f4f4"/><circle cx="1435.6" cy="592" r="2.3" fill="#f4f4f4"/><circle cx="1499" cy="567" r="2.3" fill="#f4f4f4"/><circle cx="1503" cy="563" r="2.3" fill="#f4f4f4"/><circle cx="1541" cy="596" r="2.3" fill="#f4f4f4"/><circle cx="1505" cy="624" r="2.3" fill="#f4f4f4"/><circle cx="1466" cy="650" r="2.3" fill="#f4f4f4"/><circle cx="1582" cy="676" r="2.3" fill="#f4f4f4"/><circle cx="1507" cy="712" r="2.3" fill="#f4f4f4"/><circle cx="1498" cy="729" r="2.3" fill="#f4f4f4"/><circle cx="1643" cy="538" r="2.3" fill="#f4f4f4"/><circle cx="1394" cy="603" r="2.3" fill="#f4f4f4"/></svg><!--/3D-->


<!-- view overlays -->
<svg class="a" style="left:963px;top:173px" width="956" height="862" viewBox="963 173 956 862">
 <!-- tab icons -->
 <polygon points="970.5,184.2 977,178.6 980.6,181.8 980.6,190.2 970.5,190.2" fill="#f4f4f4"/>
 <polygon points="980.6,182 983,181 983,188.5 980.6,190.2" fill="#b4b4b4"/>
 <polygon points="969,183 977.4,175 984.2,181.4 982.5,182.6 977.4,178 970.3,184.5" fill="#a8a8a8"/>
 <polyline points="970.3,184.5 977.4,178 982.5,182.6" fill="none" stroke="#1a1e25" stroke-width="0.7"/>
 <rect x="973.8" y="185.6" width="2.6" height="4.6" fill="#f2c94c" stroke="#1a1e25" stroke-width="0.6"/>
 <path d="M1131,178 l9,9 M1140,178 l-9,9" stroke="#c8c8c8" stroke-width="2"/>
 <polygon points="1906,181 1916,181 1911,186" fill="#8d96a5"/><rect x="1906" y="179" width="10" height="1" fill="#8d96a5"/>
 <!-- scrollbar -->
 <rect x="1903" y="193" width="16" height="795" fill="#343b47"/>
 <polyline points="1907,204 1911,200 1915,204" fill="none" stroke="#c8ccd2" stroke-width="1.4"/>
 <rect x="1907" y="584" width="8" height="16" rx="3" fill="#8b95a5"/>
 <polyline points="1907,975 1911,979 1915,975" fill="none" stroke="#c8ccd2" stroke-width="1.4"/>
 <!-- toggle -->
 <rect x="1682.5" y="218.5" width="35.5" height="18" rx="9" fill="#6b6d70"/>
 <circle cx="1692" cy="227.5" r="6" fill="#fafafa"/>
 <!-- view cube ring -->
 <ellipse cx="1813" cy="309" rx="63.5" ry="44" fill="#5d626b"/>
 <ellipse cx="1813" cy="311" rx="49.5" ry="29.5" fill="#20262f"/>
 <!-- cube -->
 <polygon points="1812.8,248 1848,264.6 1812.8,284 1778.3,264.6" fill="#8c8f94"/>
 <polygon points="1778.3,264.6 1812.8,284 1812.8,325 1780,304" fill="#84878c"/>
 <polygon points="1848,264.6 1845.5,303.5 1812.8,325 1812.8,284" fill="#7d8085"/>
 <polygon points="1806,282 1812.8,277 1819.5,282 1819.5,291 1812.8,295 1806,291" fill="#7a8591" opacity="0.8"/>
 <text x="0" y="0" font-family="Liberation Sans" font-size="9.5" font-weight="bold" fill="#6a6e75" transform="translate(1796,261) rotate(28)">OBEN</text>
 <text x="0" y="0" font-family="Liberation Sans" font-size="10" font-weight="bold" fill="#6a6e75" transform="translate(1783,285) rotate(32)">VORNE</text>
 <text x="0" y="0" font-family="Liberation Sans" font-size="10" font-weight="bold" fill="#6a6e75" transform="translate(1816,306) rotate(-32)">RECHTS</text>
 <text x="0" y="0" font-family="Liberation Sans" font-weight="bold" font-size="14" fill="#a4a8ae" transform="translate(1766,291) rotate(32)">W</text>
 <text x="0" y="0" font-family="Liberation Sans" font-weight="bold" font-size="14" fill="#a4a8ae" transform="translate(1848,284) rotate(-32)">N</text>
 <text x="0" y="0" font-family="Liberation Sans" font-weight="bold" font-size="14" fill="#a4a8ae" transform="translate(1757,345) rotate(-32)">S</text>
 <text x="0" y="0" font-family="Liberation Sans" font-weight="bold" font-size="14" fill="#a4a8ae" transform="translate(1851,336) rotate(32)">O</text>
 <!-- nav bar -->
 <rect x="1869.5" y="368" width="31.5" height="113" rx="3" fill="#5b606a" stroke="#6b707a" stroke-width="1"/>
 <circle cx="1895" cy="373.2" r="3" fill="#3e434b"/>
 <path d="M1893.6,371.8 l2.8,2.8 M1896.4,371.8 l-2.8,2.8" stroke="#e0e0e0" stroke-width="0.9"/>
 <path d="M1885,387.6 h10.2 v10.3 a10.1,10.1 0 1,1 -10.2,-10.3 z" fill="#c5c8cd"/>
 <circle cx="1884.8" cy="397.8" r="5.5" fill="#b8bbc0" stroke="#3e434b" stroke-width="0.8"/>
 <path d="M1880.8,401.6 l-3.4,3.6 M1888.8,401.6 l3.4,3.6" stroke="#3e434b" stroke-width="0.8"/>
 <polygon points="1882.2,417 1887.2,417 1884.7,419.6" fill="#464b53"/>
 <rect x="1872" y="424" width="26" height="1" fill="#464b53"/>
 <rect x="1877.2" y="433.4" width="10.4" height="10.4" fill="#6f9e5f" stroke="#4b7a3d" stroke-width="0.8"/>
 <circle cx="1888.2" cy="443.8" r="2.7" fill="#c8cbd0" stroke="#3e434b" stroke-width="0.8"/>
 <line x1="1890.2" y1="445.8" x2="1892.8" y2="448.2" stroke="#3e434b" stroke-width="1"/>
 <polygon points="1882.2,458.8 1887.2,458.8 1884.7,461.4" fill="#464b53"/>
 <circle cx="1895" cy="475.7" r="3" fill="#3e434b"/>
 <rect x="1893" y="474.6" width="4" height="0.9" fill="#e0e0e0"/><polygon points="1893,476.4 1897,476.4 1895,478.2" fill="#e0e0e0"/>
 <!-- view control bar -->
 <rect x="963" y="988" width="940" height="18" fill="#343b47"/>
 <rect x="963" y="988" width="2" height="18" fill="#434c5b"/>
</svg>
<div class="t" style="left:1722px;top:213px;color:#e8e8e8;letter-spacing:0;text-shadow:1px 1px 1px #000">Beschleunigte Darstellung</div>
<div class="t" style="left:1722px;top:226px;color:#e8e8e8;letter-spacing:-0.1px;font-style:italic;text-shadow:1px 1px 1px #000">Technology Preview</div>
<div class="t" style="left:988px;top:991px;color:#e8e8e8;letter-spacing:0">1 : 100</div>
<!-- P&ID importer -->
<div class="a" style="left:0;top:436px;width:2px;height:570px;background:#3b4453"></div>
<div class="a" style="left:0;top:419px;width:961px;height:17px;background:#222834"></div>
<div class="t" style="left:2px;top:421px">P&amp;ID Importer</div>
<div class="a" style="left:1px;top:436px;width:957px;height:275px;background:#d3d3d3"></div>

<!-- PID canvas drawing -->
<svg class="a" style="left:1px;top:436px" width="957" height="275" viewBox="1 436 957 275">
 <g fill="none" stroke="#000" stroke-width="1.8">
  <circle cx="15.9" cy="451" r="4.4"/>
  <path d="M19.98,442.64 L18.60,439.31 L13.20,439.31 L11.82,442.64 L10.70,443.29 L7.12,442.82 L4.42,447.49 L6.62,450.35 L6.62,451.65 L4.42,454.51 L7.12,459.18 L10.70,458.71 L11.82,459.36 L13.20,462.69 L18.60,462.69 L19.98,459.36 L21.10,458.71 L24.68,459.18 L27.38,454.51 L25.18,451.65 L25.18,450.35 L27.38,447.49 L24.68,442.82 L21.10,443.29 Z" stroke-linejoin="round"/>
 </g>
 <rect x="401" y="535" width="58" height="44" fill="#000"/>
 <polyline points="403.5,576 403.5,542.5 456,542.5" fill="none" stroke="#1ed81e" stroke-width="1"/>
 <path d="M407,542 Q430,533 456,542" fill="none" stroke="#1ed81e" stroke-width="1" stroke-dasharray="2 2.5"/>
 <line x1="381" y1="549" x2="394" y2="549" stroke="#1010ff" stroke-width="2"/>
 <line x1="394" y1="549" x2="401" y2="549" stroke="#000" stroke-width="2"/>
 <line x1="459" y1="549" x2="464" y2="549" stroke="#1ed81e" stroke-width="2"/>
 <rect x="464" y="544" width="10" height="10" fill="#fff"/>
 <rect x="476" y="532" width="11" height="22" fill="#fff"/>
 <rect x="489" y="532" width="10" height="10" fill="#fff"/>
 <polyline points="499,536.5 510.5,536.5 510.5,552.5" fill="none" stroke="#f01010" stroke-width="2"/>
 <rect x="504" y="552.5" width="11" height="10.5" fill="#fff"/>
 <g fill="#f04040"><rect x="467" y="548" width="2" height="1"/><rect x="478" y="538" width="6" height="1"/><rect x="482" y="546" width="1" height="1"/><rect x="492" y="537" width="2" height="1"/><rect x="506" y="558" width="3" height="1"/></g>
 <rect x="484.5" y="561" width="5.5" height="13" fill="#fff"/>
 <line x1="459" y1="573.5" x2="510" y2="573.5" stroke="#000" stroke-width="2"/>
 <line x1="472" y1="573.5" x2="508" y2="573.5" stroke="#1010ff" stroke-width="2" stroke-dasharray="2 3"/><line x1="463" y1="573.5" x2="472" y2="573.5" stroke="#1ed81e" stroke-width="2"/>
 <polyline points="464.5,573.5 464.5,590.5 510,590.5" fill="none" stroke="#1010ff" stroke-width="2"/>
 <line x1="510" y1="573" x2="510" y2="711" stroke="#1010ff" stroke-width="2"/>
 <rect x="401" y="661" width="58" height="43.5" fill="#000"/>
 <polyline points="403.5,702 403.5,668.5 456,668.5" fill="none" stroke="#1ed81e" stroke-width="1"/>
 <path d="M407,668 Q430,659 456,668" fill="none" stroke="#1ed81e" stroke-width="1" stroke-dasharray="2 2.5"/>
 <line x1="380" y1="676" x2="394" y2="676" stroke="#1010ff" stroke-width="2"/>
 <line x1="394" y1="676" x2="401" y2="676" stroke="#000" stroke-width="2"/>
 <line x1="459" y1="675" x2="464" y2="675" stroke="#1ed81e" stroke-width="2"/>
 <rect x="464" y="670" width="10" height="10" fill="#fff"/>
 <rect x="476" y="658" width="11" height="22" fill="#fff"/>
 <rect x="489" y="658" width="10.5" height="11" fill="#fff"/>
 <rect x="489" y="675" width="10.5" height="10" fill="#fff"/>
 <line x1="494.6" y1="669" x2="494.6" y2="675" stroke="#f01010" stroke-width="2"/>
 <g fill="#f04040"><rect x="491" y="663" width="6" height="1"/><rect x="491" y="680" width="6" height="1"/></g>
 <rect x="480" y="684" width="5" height="13" fill="#fff"/>
 <line x1="459" y1="696.5" x2="510" y2="696.5" stroke="#000" stroke-width="2"/><line x1="463" y1="696.5" x2="508" y2="696.5" stroke="#1010ff" stroke-width="2" stroke-dasharray="2 3"/>
 <line x1="464.5" y1="696" x2="464.5" y2="711" stroke="#1010ff" stroke-width="2"/>
 <line x1="502" y1="696" x2="502" y2="711" stroke="#1010ff" stroke-width="2"/>
 <line x1="510" y1="700" x2="558" y2="700" stroke="#1010ff" stroke-width="2"/>
</svg>
<div class="a" style="left:1px;top:711px;width:957px;height:1px;background:#a0a0a0"></div>
<div class="a" style="left:2px;top:712px;width:956px;height:248px;background:#ffffff"></div>
<div class="a" style="left:8px;top:715px;width:25px;height:26px;background:#808080;border:1px solid #111"></div>
<div class="t" style="left:38px;top:722px;color:#000;letter-spacing:-0.2px">Primary</div>
<div class="a" style="left:558px;top:715px;width:129px;height:26px;background:#dddddd;border:1px solid #707070"></div>
<svg class="a" style="left:603px;top:718px" width="40" height="20" viewBox="0 0 40 20"><path d="M0.5,10 C8,4 14,1.5 20,0 C26,1.5 32,4 39.5,10 C32,16 26,18.5 20,19.6 C14,18.5 8,16 0.5,10 Z" fill="#000"/><ellipse cx="20" cy="10" rx="7.2" ry="5.8" fill="#dddddd"/><ellipse cx="20" cy="10" rx="3.1" ry="3" fill="#000"/></svg>
<div class="a" style="left:691px;top:715px;width:261px;height:26px;background:#dddddd;border:1px solid #707070"></div>
<div class="t" style="left:754px;top:722px;color:#000;letter-spacing:-0.2px">Eigenschaften zuordnen...</div>
<div class="a" style="left:8px;top:745px;width:25px;height:26px;background:#808080;border:1px solid #111"></div>
<div class="t" style="left:38px;top:752px;color:#000;letter-spacing:-0.2px">Primary</div>
<div class="a" style="left:558px;top:745px;width:129px;height:26px;background:#dddddd;border:1px solid #707070"></div>
<svg class="a" style="left:603px;top:748px" width="40" height="20" viewBox="0 0 40 20"><path d="M0.5,10 C8,4 14,1.5 20,0 C26,1.5 32,4 39.5,10 C32,16 26,18.5 20,19.6 C14,18.5 8,16 0.5,10 Z" fill="#000"/><ellipse cx="20" cy="10" rx="7.2" ry="5.8" fill="#dddddd"/><ellipse cx="20" cy="10" rx="3.1" ry="3" fill="#000"/></svg>
<div class="a" style="left:8px;top:775px;width:25px;height:26px;background:#808080;border:1px solid #111"></div>
<div class="t" style="left:38px;top:782px;color:#000;letter-spacing:-0.2px">Primary</div>
<div class="a" style="left:558px;top:775px;width:129px;height:26px;background:#dddddd;border:1px solid #707070"></div>
<svg class="a" style="left:603px;top:778px" width="40" height="20" viewBox="0 0 40 20"><path d="M0.5,10 C8,4 14,1.5 20,0 C26,1.5 32,4 39.5,10 C32,16 26,18.5 20,19.6 C14,18.5 8,16 0.5,10 Z" fill="#000"/><ellipse cx="20" cy="10" rx="7.2" ry="5.8" fill="#dddddd"/><ellipse cx="20" cy="10" rx="3.1" ry="3" fill="#000"/></svg>
<div class="a" style="left:691px;top:775px;width:261px;height:26px;background:#dddddd;border:1px solid #707070"></div>
<div class="t" style="left:754px;top:782px;color:#000;letter-spacing:-0.2px">Eigenschaften zuordnen...</div>
<div class="a" style="left:8px;top:805px;width:25px;height:26px;background:#808080;border:1px solid #111"></div>
<div class="t" style="left:38px;top:812px;color:#000;letter-spacing:-0.2px">GateValve</div>
<div class="a" style="left:558px;top:805px;width:129px;height:26px;background:#dddddd;border:1px solid #707070"></div>
<svg class="a" style="left:603px;top:808px" width="40" height="20" viewBox="0 0 40 20"><path d="M0.5,10 C8,4 14,1.5 20,0 C26,1.5 32,4 39.5,10 C32,16 26,18.5 20,19.6 C14,18.5 8,16 0.5,10 Z" fill="#000"/><ellipse cx="20" cy="10" rx="7.2" ry="5.8" fill="#dddddd"/><ellipse cx="20" cy="10" rx="3.1" ry="3" fill="#000"/></svg>
<div class="a" style="left:691px;top:805px;width:261px;height:26px;background:#dddddd;border:1px solid #707070"></div>
<div class="t" style="left:754px;top:812px;color:#000;letter-spacing:-0.2px">Eigenschaften zuordnen...</div>
<div class="a" style="left:8px;top:835px;width:25px;height:26px;background:#808080;border:1px solid #111"></div>
<div class="t" style="left:38px;top:842px;color:#000;letter-spacing:-0.2px">Primary</div>
<div class="a" style="left:558px;top:835px;width:129px;height:26px;background:#dddddd;border:1px solid #707070"></div>
<svg class="a" style="left:603px;top:838px" width="40" height="20" viewBox="0 0 40 20"><path d="M0.5,10 C8,4 14,1.5 20,0 C26,1.5 32,4 39.5,10 C32,16 26,18.5 20,19.6 C14,18.5 8,16 0.5,10 Z" fill="#000"/><ellipse cx="20" cy="10" rx="7.2" ry="5.8" fill="#dddddd"/><ellipse cx="20" cy="10" rx="3.1" ry="3" fill="#000"/></svg>
<div class="a" style="left:691px;top:835px;width:261px;height:26px;background:#dddddd;border:1px solid #707070"></div>
<div class="t" style="left:754px;top:842px;color:#000;letter-spacing:-0.2px">Eigenschaften zuordnen...</div>
<div class="a" style="left:8px;top:865px;width:25px;height:26px;background:#808080;border:1px solid #111"></div>
<div class="t" style="left:38px;top:872px;color:#000;letter-spacing:-0.2px">ConcentricReducer</div>
<div class="a" style="left:558px;top:865px;width:129px;height:26px;background:#dddddd;border:1px solid #707070"></div>
<svg class="a" style="left:603px;top:868px" width="40" height="20" viewBox="0 0 40 20"><path d="M0.5,10 C8,4 14,1.5 20,0 C26,1.5 32,4 39.5,10 C32,16 26,18.5 20,19.6 C14,18.5 8,16 0.5,10 Z" fill="#000"/><ellipse cx="20" cy="10" rx="7.2" ry="5.8" fill="#dddddd"/><ellipse cx="20" cy="10" rx="3.1" ry="3" fill="#000"/></svg>
<div class="a" style="left:691px;top:865px;width:261px;height:26px;background:#dddddd;border:1px solid #707070"></div>
<div class="t" style="left:754px;top:872px;color:#000;letter-spacing:-0.2px">Eigenschaften zuordnen...</div>
<div class="a" style="left:2px;top:960px;width:956px;height:26px;background:#dddddd;border:1px solid #707070;border-width:2px 1px 1px 1px"></div>
<div class="t" style="left:410px;top:966px;color:#000;letter-spacing:-0.2px">Zurück zur Hauptübersicht</div>
<div class="a" style="left:2px;top:986px;width:956px;height:20px;background:#dddddd;border:1px solid #707070;border-width:1px 1px 1px 1px"></div>
<div class="t" style="left:431px;top:989px;color:#000;letter-spacing:-0.2px">Json-Datei laden...</div>

<!-- STATUS -->
<div class="a" style="left:0;top:1006px;width:1919px;height:26px;background:#3b4453"></div>
<div class="a" style="left:0;top:1032px;width:1919px;height:3px;background:#1e2a2c"></div>
<div class="t" style="left:1px;top:1014px;letter-spacing:-0.26px">Luftdurchlässe : M_Return Diffuser : 600 x 600 Face 300 x 300 Connection</div>


<svg class="a" style="left:963px;top:985px" width="956" height="50" viewBox="963 985 956 50">
 <!-- view control bar icons -->
 <g>
  <rect x="1048" y="992" width="16" height="12" fill="#d8d8d8"/>
  <g fill="#8a8a8a"><rect x="1048" y="992" width="4" height="3"/><rect x="1056" y="992" width="4" height="3"/><rect x="1052" y="995" width="4" height="3"/><rect x="1060" y="995" width="4" height="3"/><rect x="1048" y="998" width="4" height="3"/><rect x="1056" y="998" width="4" height="3"/><rect x="1052" y="1001" width="4" height="3"/><rect x="1060" y="1001" width="4" height="3"/></g>
  <polygon points="1075,995 1079,991 1090,991 1090,1001 1086,1005 1075,1005" fill="#5cb8f0"/>
  <polygon points="1075,995 1079,991 1090,991 1086,995" fill="#a8dcfa"/><polygon points="1086,995 1090,991 1090,1001 1086,1005" fill="#3a90d0"/>
  <circle cx="1106" cy="996" r="4" fill="#f5c542"/><g stroke="#f5c542" stroke-width="1"><line x1="1106" y1="989" x2="1106" y2="991"/><line x1="1099" y1="996" x2="1101" y2="996"/><line x1="1101" y1="991" x2="1102.5" y2="992.5"/><line x1="1111" y1="991" x2="1109.5" y2="992.5"/></g>
  <circle cx="1133" cy="995" r="6" fill="#e8e8e8"/><ellipse cx="1133" cy="1004" rx="5" ry="1.5" fill="#000"/>
  <path d="M1152,995 h12 l2,-2 2,1 -3,4 -2,5 h-7 z" fill="#d0d0d0"/>
  <path d="M1180,1003 h2 v-8 h8 v-4" fill="none" stroke="#d8d8d8" stroke-width="2"/><rect x="1177" y="1001" width="3" height="1.5" fill="#5cc8e0"/><rect x="1190" y="989" width="1.5" height="3" fill="#5cc8e0"/>
  <path d="M1207,1003 h1 v-8 h8 v-4" fill="none" stroke="#d8d8d8" stroke-width="2"/><rect x="1204" y="1001" width="3" height="1.5" fill="#5cc8e0"/>
  <polygon points="1231,997 1238,990 1246,997 1246,1005 1231,1005" fill="#e0e0e0"/><rect x="1239" y="999" width="7" height="6" fill="#2fb8c8"/>
  <g fill="none" stroke="#8a8a8a" stroke-width="1.5"><circle cx="1260" cy="998" r="3"/><circle cx="1268" cy="998" r="3"/></g>
  <circle cx="1290" cy="995" r="4.5" fill="#5ad0e0"/><rect x="1288" y="999" width="4" height="4" fill="#f0f0f0"/>
  <rect x="1310" y="991" width="9" height="9" fill="#b8b8b8"/><rect x="1314" y="996" width="7" height="8" fill="none" stroke="#d8d8d8" stroke-dasharray="2 1"/>
  <path d="M1334,1004 v-10 l4,-3 h11 v10" fill="none" stroke="#c0c0c0" stroke-width="1"/><rect x="1336" y="998" width="6" height="6" fill="none" stroke="#e04040"/><circle cx="1348" cy="999" r="3.5" fill="#f5c542"/>
  <polygon points="1362,997 1366,994 1374,994 1374,1000 1370,1003 1362,1003" fill="#5cb8f0"/><polygon points="1366,997 1370,994 1374,994 1370,997" fill="#a8dcfa"/>
  <path d="M1385,991 h14 M1386,989 v14 M1386,999 h10" fill="none" stroke="#d8d8d8" stroke-width="1.3" stroke-dasharray="2 1"/>
  <g fill="#5ad0e0"><circle cx="1113" cy="999" r="3.5"/><circle cx="1140" cy="999" r="3.5"/><circle cx="1165" cy="999" r="3.5"/><circle cx="1216" cy="999" r="3.5"/><circle cx="1398" cy="999" r="3.5"/></g>
  <g fill="#f0f0f0"><rect x="1112" y="1002" width="2.5" height="2.5"/><rect x="1139" y="1002" width="2.5" height="2.5"/><rect x="1164" y="1002" width="2.5" height="2.5"/><rect x="1215" y="1002" width="2.5" height="2.5"/><rect x="1397" y="1002" width="2.5" height="2.5"/></g>
 </g>
 <rect x="1408" y="988" width="495" height="18" fill="#2f3541"/>
 <rect x="1423" y="988" width="1" height="18" fill="#3f4652"/><rect x="1886" y="988" width="1" height="18" fill="#3f4652"/>
 <polyline points="1416,993 1413,997 1416,1001" fill="none" stroke="#b8bec8" stroke-width="1.4"/>
 <polyline points="1893,993 1896,997 1893,1001" fill="none" stroke="#b8bec8" stroke-width="1.4"/>
 <rect x="1646.5" y="994" width="17.5" height="7" rx="3.5" fill="#7c889a"/>
 <g fill="#8a929e"><rect x="1908" y="1002" width="1.5" height="1.5"/><rect x="1912" y="1002" width="1.5" height="1.5"/><rect x="1912" y="998" width="1.5" height="1.5"/></g>
 <!-- status bar icons -->
 <g fill="#9a9ea5">
  <path d="M1667,1013 h10 v4 h-10 z" fill="none" stroke="#9a9ea5" stroke-width="1"/><path d="M1673,1015 l7,6 -3,0 2,4 -1.5,0.8 -2,-4 -2.5,2 z"/>
  <path d="M1692,1020 l5,-5 5,5 -3,0 z"/><path d="M1699,1015 l7,6 -3,0 2,4 -1.5,0.8 -2,-4 -2.5,2 z"/>
  <rect x="1718" y="1014" width="10" height="1.5"/><rect x="1722" y="1014" width="2" height="8"/><path d="M1725,1017 l7,6 -3,0 2,4 -1.5,0.8 -2,-4 -2.5,2 z"/>
  <path d="M1745,1015 h5 v13 h-5 z"/><path d="M1750,1017 l7,6 -3,0 2,4 -1.5,0.8 -2,-4 -2.5,2 z"/>
  <rect x="1770" y="1019" width="9" height="1.5"/><rect x="1774" y="1013" width="1.5" height="12"/><path d="M1776,1018 l7,6 -3,0 2,4 -1.5,0.8 -2,-4 -2.5,2 z"/>
  <circle cx="1804.5" cy="1020" r="5.5" fill="none" stroke="#7a7e85" stroke-width="1.5" stroke-dasharray="2 2"/>
  <path d="M1820,1013 h17 l-6,7 v8 h-4 v-8 z" fill="#c8ccd2"/>
 </g>
 <path d="M1104,1010 l0,0" />
 <polyline points="1066,1020 1069,1023 1072,1020" fill="none" stroke="#5d6573" stroke-width="1.2"/>
 <path d="M1088,1027 v-5 h4 l6,-6 h4 v4 h-3 l-3,3 v4 z" fill="#9a9ea5"/>
 <polyline points="1382,1020 1385,1023 1388,1020" fill="none" stroke="#5d6573" stroke-width="1.2"/>
 <g fill="#9a9ea5"><rect x="1137" y="1014" width="16" height="14"/><rect x="1163" y="1014" width="16" height="12"/></g>
 <g fill="#3b4453"><rect x="1141" y="1017" width="10" height="1.5"/><rect x="1141" y="1020" width="10" height="1.5"/><rect x="1141" y="1023" width="10" height="1.5"/><rect x="1167" y="1017" width="10" height="1.5"/><rect x="1167" y="1020" width="10" height="1.5"/><rect x="1138" y="1017" width="2" height="1.5"/><rect x="1138" y="1020" width="2" height="1.5"/><rect x="1138" y="1023" width="2" height="1.5"/></g>
</svg>
<div class="t" style="left:1101px;top:1015px;color:#9a9ea5;letter-spacing:0">:0</div>
<div class="t" style="left:1189px;top:1015px;color:#8a929e;letter-spacing:0">Basisvorlage</div>
<div class="t" style="left:1838px;top:1015px;color:#e0e0e0;letter-spacing:0">:0</div>
<svg class="a" style="left:846px;top:1011px" width="18" height="18"><path d="M2,15 v-9 l3,-2 v9 z M6,14 v-11 l3,2 v9 z M10,13 v-9 l5,3 v6 l-3,2 z" fill="#9aa0a8"/></svg>
<!-- DIALOG -->
<div class="a" style="left:558px;top:270px;width:784px;height:441px;background:#f0f0f0;border-radius:5px 5px 0 0;box-shadow:0 3px 10px rgba(0,0,0,0.10)"></div>
<div class="a" style="left:558px;top:270px;width:784px;height:30px;background:#f5f3d0;border-radius:5px 5px 0 0"></div>
<div class="t" style="left:566px;top:279px;color:#000">Eigenschaften auswählen</div>


<div class="a" style="left:568px;top:300px;width:764px;height:26px;background:#fff;border:2px solid #7f848c"></div>
<div class="t" style="left:574px;top:308px;color:#000;letter-spacing:-0.2px">Ausgewähltes Element: 600 x 600 Face 300 x 300 Connection</div>
<div class="a" style="left:568px;top:335px;width:764px;height:321px;background:#fff;border:3px solid #7f848c"></div>
<div class="a" style="left:725px;top:338px;width:3px;height:315px;background:#7f848c"></div>
<div class="a" style="left:572px;top:339px;width:153px;height:22px;background:#cce8f7;border:1px solid #26a0da"></div>
<div class="t" style="left:583px;top:345px;color:#000;letter-spacing:-0.2px">Eigenschaften auswählen</div>
<div class="t" style="left:583px;top:367px;color:#000;letter-spacing:-0.2px">Eigenschaften anwenden</div>
<div class="t" style="left:745px;top:354px;color:#000;letter-spacing:-0.2px">Alle auswählen</div>
<div class="a" style="left:1272px;top:352px;width:14px;height:13px;border:1px solid #333;background:#fff"></div>
<div class="a" style="left:739px;top:382px;width:581px;height:262px;border:1px solid #a9acb3;background:#fff"></div>
<div class="a" style="left:740px;top:413px;width:561px;height:29px;background:#f3f3f3;border-top:1px solid #e0e0e0;border-bottom:1px solid #e0e0e0"></div>
<div class="a" style="left:1301px;top:383px;width:17px;height:260px;background:#f0f0f0"></div>
<div class="a" style="left:1302px;top:401px;width:15px;height:52px;background:#cdcdcd"></div>
<svg class="a" style="left:1303px;top:387px" width="12" height="8"><polyline points="2,6 6,2 10,6" fill="none" stroke="#a3a3a3" stroke-width="1.2"/></svg>
<svg class="a" style="left:1303px;top:630px" width="12" height="8"><polyline points="2,2 6,6 10,2" fill="none" stroke="#a3a3a3" stroke-width="1.2"/></svg>
<div class="t" style="left:746px;top:388px;color:#000;letter-spacing:-0.2px">PnPID</div>
<div class="t" style="left:1008px;top:388px;color:#000;letter-spacing:-0.2px">716</div>
<div class="a" style="left:1272px;top:387px;width:14px;height:13px;border:1px solid #333;background:#fff"></div>
<svg class="a" style="left:1272px;top:387px" width="14" height="13"><polyline points="3,6.5 5.8,9.5 11,3" fill="none" stroke="#111" stroke-width="1.8"/></svg>
<div class="t" style="left:746px;top:417px;color:#000;letter-spacing:-0.2px">PnPClassName</div>
<div class="t" style="left:1008px;top:417px;color:#000;letter-spacing:-0.2px">Primary</div>
<div class="a" style="left:1272px;top:416px;width:14px;height:13px;border:1px solid #333;background:#fff"></div>
<svg class="a" style="left:1272px;top:416px" width="14" height="13"><polyline points="3,6.5 5.8,9.5 11,3" fill="none" stroke="#111" stroke-width="1.8"/></svg>
<div class="t" style="left:746px;top:446px;color:#000;letter-spacing:-0.2px">PnPStatus</div>
<div class="t" style="left:1008px;top:446px;color:#000;letter-spacing:-0.2px">0</div>
<div class="a" style="left:1272px;top:445px;width:14px;height:13px;border:1px solid #333;background:#fff"></div>
<div class="t" style="left:746px;top:475px;color:#000;letter-spacing:-0.2px">PnPRevision</div>
<div class="t" style="left:1008px;top:475px;color:#000;letter-spacing:-0.2px">1</div>
<div class="a" style="left:1272px;top:474px;width:14px;height:13px;border:1px solid #333;background:#fff"></div>
<div class="t" style="left:746px;top:504px;color:#000;letter-spacing:-0.2px">PnPGuid</div>
<div class="t" style="left:1008px;top:504px;color:#000;letter-spacing:0.05px">9d9b0a71-f041-4b43-872b-3ddbb031ec9c</div>
<div class="a" style="left:1272px;top:503px;width:14px;height:13px;border:1px solid #333;background:#fff"></div>
<div class="t" style="left:746px;top:533px;color:#000;letter-spacing:-0.2px">PnPTimestamp</div>
<div class="t" style="left:1008px;top:533px;color:#000;letter-spacing:-0.2px">635957424659049273</div>
<div class="a" style="left:1272px;top:532px;width:14px;height:13px;border:1px solid #333;background:#fff"></div>
<div class="t" style="left:746px;top:562px;color:#000;letter-spacing:-0.2px">ClassName</div>
<div class="t" style="left:1008px;top:562px;color:#000;letter-spacing:-0.2px">Primary Line Segment</div>
<div class="a" style="left:1272px;top:561px;width:14px;height:13px;border:1px solid #333;background:#fff"></div>
<div class="t" style="left:746px;top:591px;color:#000;letter-spacing:-0.2px">Description</div>
<div class="t" style="left:1008px;top:591px;color:#000;letter-spacing:-0.65px">PRIMARY LINE SEGMENT</div>
<div class="a" style="left:1272px;top:590px;width:14px;height:13px;border:1px solid #333;background:#fff"></div>
<div class="t" style="left:746px;top:620px;color:#000;letter-spacing:-0.2px">Manufacturer</div>
<div class="a" style="left:1272px;top:619px;width:14px;height:13px;border:1px solid #333;background:#fff"></div>

<div class="a" style="left:1322px;top:277px;width:19px;height:19px;background:#c94a4e"></div>
<svg class="a" style="left:1322px;top:277px" width="19" height="19"><g stroke="#fff" stroke-width="1.6"><line x1="7" y1="7" x2="12" y2="12"/><line x1="12" y1="7" x2="7" y2="12"/></g></svg>
<div class="a" style="left:1082px;top:676px;width:120px;height:25px;background:#e1e1e1;border:1px solid #adadad"></div>
<div class="t" style="left:1082px;top:683px;width:120px;text-align:center;color:#000;letter-spacing:0">OK</div>
<div class="a" style="left:1212px;top:676px;width:120px;height:25px;background:#e1e1e1;border:1px solid #adadad"></div>
<div class="t" style="left:1212px;top:683px;width:120px;text-align:center;color:#000;letter-spacing:-0.2px">Abbrechen</div>
</body></html>
